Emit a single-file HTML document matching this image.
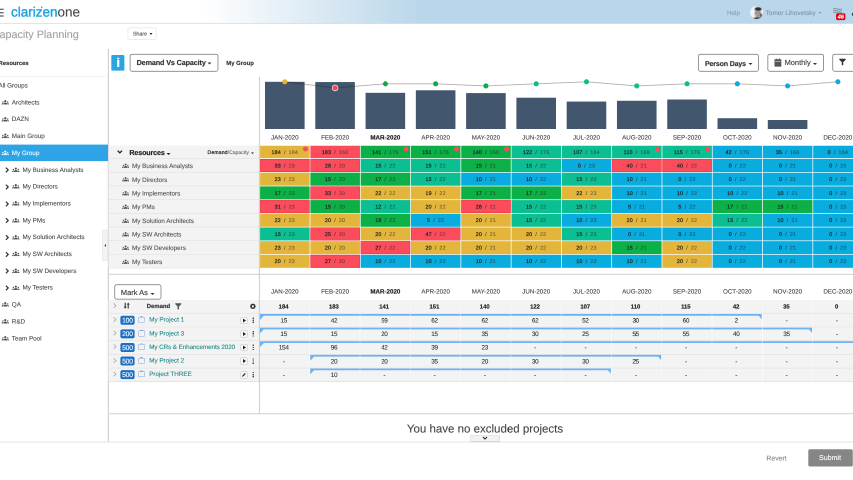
<!DOCTYPE html>
<html><head><meta charset="utf-8"><title>Capacity Planning</title>
<style>
html,body{margin:0;padding:0;background:#fff;overflow:hidden;}
body{width:853px;height:480px;position:relative;font-family:"Liberation Sans",sans-serif;}
#w{position:absolute;left:0;top:0;width:1706px;height:960px;transform:scale(0.5);transform-origin:0 0;overflow:hidden;will-change:transform;font-family:"Liberation Sans",sans-serif;color:#333;text-rendering:geometricPrecision;-webkit-text-stroke:0.18px;}
#w b{font-weight:normal;}
#w [style*="font-weight:bold"]{-webkit-text-stroke:0.3px currentColor;}
#w b{-webkit-text-stroke:0.4px currentColor;letter-spacing:0.03em;}
</style></head><body><div id="w">
<div class="" style="position:absolute;left:0.00px;top:0.00px;width:1706.00px;height:47.00px;background:linear-gradient(90deg,#fff 0,#fff 410.00px,#b9d6ea 850.00px,#b9d6ea 100%);"></div>
<svg style="position:absolute;left:-1px;top:45px;width:1708px;height:4px;overflow:visible"><rect x="1.00" y="1.40" width="1706.00" height="1.40" fill="#d6dade"/></svg>
<svg style="position:absolute;left:-3px;top:16px;width:12px;height:5px;overflow:visible"><rect x="1.00" y="1.30" width="9.40" height="2.60" fill="#666"/></svg>
<svg style="position:absolute;left:-3px;top:23px;width:12px;height:5px;overflow:visible"><rect x="1.00" y="1.10" width="9.40" height="2.60" fill="#666"/></svg>
<svg style="position:absolute;left:-3px;top:29px;width:12px;height:6px;overflow:visible"><rect x="1.00" y="1.70" width="9.40" height="2.60" fill="#666"/></svg>
<div class="" style="position:absolute;top:8.20px;line-height:32.40px;font-size:27.00px;white-space:nowrap;left:22.00px;"><span style="color:#1fa5e2;-webkit-text-stroke:0.84px #1fa5e2;">clarizen</span><span style="color:#4a4a4a;-webkit-text-stroke:0.20px #4a4a4a;">one</span></div>
<svg style="position:absolute;left:81px;top:12px;width:5px;height:6px;overflow:visible"><rect x="1.00" y="1.20" width="2.80" height="3.00" fill="#1fa5e2"/></svg>
<div class="" style="position:absolute;top:18.64px;line-height:15.12px;font-size:12.60px;white-space:nowrap;left:1454.00px;color:#88a0b4;">Help</div>
<svg viewBox="0 0 130 130" style="position:absolute;left:1499.80px;top:11.60px;width:26.00px;height:26.20px"><defs><clipPath id="av"><circle cx="65" cy="65" r="64"/></clipPath><filter id="bl"><feGaussianBlur stdDeviation="4"/></filter></defs><g clip-path="url(#av)"><rect width="130" height="130" fill="#f3f3f3"/><g filter="url(#bl)"><ellipse cx="78" cy="72" rx="33" ry="42" fill="#a8a8a8"/><ellipse cx="82" cy="30" rx="36" ry="19" fill="#2b2b2b"/><ellipse cx="64" cy="70" rx="9" ry="6" fill="#4a4a4a"/><ellipse cx="92" cy="70" rx="8" ry="6" fill="#4a4a4a"/><ellipse cx="80" cy="98" rx="12" ry="5" fill="#666"/><ellipse cx="75" cy="126" rx="45" ry="14" fill="#333"/><ellipse cx="110" cy="95" rx="10" ry="22" fill="#444"/></g></g></svg>
<div class="" style="position:absolute;top:17.50px;line-height:15.41px;font-size:12.84px;white-space:nowrap;left:1531.40px;color:#8092a2;">Tomer Lihovetsky</div>
<div style="position:absolute;left:1637.40px;top:23.60px;width:0;height:0;border-left:3.60px solid transparent;border-right:3.60px solid transparent;border-top:3.80px solid #7d8c99;"></div>
<svg viewBox="0 0 90 60" style="position:absolute;left:1666.00px;top:16.40px;width:18.00px;height:12.00px"><g fill="none" stroke="#74858f" stroke-width="8" stroke-linecap="round"><path d="M4 8C30 -2 50 22 86 10"/><path d="M4 26C30 16 50 40 86 28"/><path d="M4 44C30 34 50 58 86 46"/></g></svg>
<svg style="position:absolute;left:1671px;top:25px;width:21px;height:17px;overflow:visible"><rect x="1.20" y="1.60" width="18.60" height="13.60" rx="3.20" fill="#e60012"/></svg>
<div class="" style="position:absolute;top:27.98px;line-height:13.44px;font-size:11.20px;white-space:nowrap;left:1381.40px;width:600.00px;text-align:center;color:#fff;font-weight:bold;font-style:italic;letter-spacing:-0.03em;">46</div>
<svg style="position:absolute;left:1702px;top:24px;width:11px;height:9px;overflow:visible"><rect x="1.80" y="1.20" width="8.20" height="6.60" rx="2.40" fill="#3c3c3c"/></svg>
<div class="" style="position:absolute;top:55.94px;line-height:25.92px;font-size:21.60px;white-space:nowrap;left:-16.60px;color:#a0a0a0;">Capacity Planning</div>
<svg style="position:absolute;left:252px;top:52px;width:64px;height:30px;overflow:visible"><rect x="3.70" y="3.70" width="57.00" height="23.20" rx="3.60" fill="#fff" stroke="#e9e9e9" stroke-width="1.80"/></svg>
<div class="" style="position:absolute;top:61.72px;line-height:12.96px;font-size:10.80px;white-space:nowrap;left:265.80px;color:#4a4a4a;letter-spacing:-0.015em;">Share</div>
<div style="position:absolute;left:299.00px;top:66.00px;width:0;height:0;border-left:3.70px solid transparent;border-right:3.70px solid transparent;border-top:4.00px solid #2a2a2a;"></div>
<svg style="position:absolute;left:214px;top:97px;width:5px;height:788px;overflow:visible"><rect x="1.60" y="1.00" width="2.20" height="786.00" fill="#cfcfcf"/></svg>
<div class="" style="position:absolute;top:118.92px;line-height:14.16px;font-size:11.80px;white-space:nowrap;left:-3.00px;font-weight:bold;color:#333;">Resources</div>
<svg style="position:absolute;left:-1px;top:151px;width:218px;height:4px;overflow:visible"><rect x="1.00" y="1.40" width="216.00" height="1.00" fill="#e8e8e8"/></svg>
<div class="" style="position:absolute;top:164.04px;line-height:15.12px;font-size:12.60px;white-space:nowrap;left:-3.20px;color:#484848;">All Groups</div>
<svg viewBox="0 0 24 15" style="position:absolute;left:3.20px;top:199.85px;width:15.20px;height:9.50px"><g fill="#484848" stroke="#484848" stroke-width="0.5"><circle cx="12" cy="3.4" r="3.0"/><circle cx="4.4" cy="6.4" r="1.9"/><circle cx="19.6" cy="6.4" r="1.9"/><path d="M6.3 14c0-3.4 2.3-5.6 5.7-5.6s5.700 2.200 5.700 5.600z"/><path d="M0.300 14c0-2.300 1.500-3.700 4.100-3.700.500 0 1 .100 1.500.200-.900 1-1.300 2.100-1.300 3.500z"/><path d="M23.700 14c0-2.300-1.500-3.700-4.100-3.700-.500 0-1 .100-1.500.200.900 1 1.300 2.100 1.300 3.500z"/></g></svg>
<div class="" style="position:absolute;top:197.64px;line-height:15.12px;font-size:12.60px;white-space:nowrap;left:23.60px;color:#484848;">Architects</div>
<svg viewBox="0 0 24 15" style="position:absolute;left:3.20px;top:233.65px;width:15.20px;height:9.50px"><g fill="#484848" stroke="#484848" stroke-width="0.5"><circle cx="12" cy="3.4" r="3.0"/><circle cx="4.4" cy="6.4" r="1.9"/><circle cx="19.6" cy="6.4" r="1.9"/><path d="M6.3 14c0-3.4 2.3-5.6 5.7-5.6s5.700 2.200 5.700 5.600z"/><path d="M0.300 14c0-2.300 1.500-3.700 4.100-3.700.500 0 1 .100 1.500.200-.900 1-1.300 2.100-1.300 3.500z"/><path d="M23.700 14c0-2.300-1.500-3.700-4.100-3.700-.500 0-1 .100-1.500.200.900 1 1.300 2.100 1.300 3.500z"/></g></svg>
<div class="" style="position:absolute;top:231.44px;line-height:15.12px;font-size:12.60px;white-space:nowrap;left:23.60px;color:#484848;">DAZN</div>
<svg viewBox="0 0 24 15" style="position:absolute;left:3.20px;top:267.25px;width:15.20px;height:9.50px"><g fill="#484848" stroke="#484848" stroke-width="0.5"><circle cx="12" cy="3.4" r="3.0"/><circle cx="4.4" cy="6.4" r="1.9"/><circle cx="19.6" cy="6.4" r="1.9"/><path d="M6.3 14c0-3.4 2.3-5.6 5.7-5.6s5.700 2.200 5.700 5.600z"/><path d="M0.300 14c0-2.300 1.500-3.700 4.100-3.700.500 0 1 .100 1.500.200-.900 1-1.300 2.100-1.300 3.500z"/><path d="M23.700 14c0-2.300-1.500-3.700-4.100-3.700-.500 0-1 .100-1.500.200.900 1 1.300 2.100 1.300 3.500z"/></g></svg>
<div class="" style="position:absolute;top:265.04px;line-height:15.12px;font-size:12.60px;white-space:nowrap;left:23.60px;color:#484848;">Main Group</div>
<svg style="position:absolute;left:-1px;top:288px;width:218px;height:36px;overflow:visible"><rect x="1.00" y="1.20" width="216.00" height="33.00" fill="#2ea3e6"/></svg>
<svg viewBox="0 0 24 15" style="position:absolute;left:3.20px;top:301.25px;width:15.20px;height:9.50px"><g fill="#fff" stroke="#fff" stroke-width="0.5"><circle cx="12" cy="3.4" r="3.0"/><circle cx="4.4" cy="6.4" r="1.9"/><circle cx="19.6" cy="6.4" r="1.9"/><path d="M6.3 14c0-3.4 2.3-5.6 5.7-5.6s5.700 2.200 5.700 5.600z"/><path d="M0.300 14c0-2.300 1.500-3.700 4.100-3.700.500 0 1 .100 1.500.200-.900 1-1.300 2.100-1.300 3.500z"/><path d="M23.700 14c0-2.300-1.500-3.700-4.100-3.700-.500 0-1 .100-1.500.200.900 1 1.300 2.100 1.300 3.500z"/></g></svg>
<div class="" style="position:absolute;top:299.04px;line-height:15.12px;font-size:12.60px;white-space:nowrap;left:23.60px;color:#fff;">My Group</div>
<svg viewBox="0 0 10 14" style="position:absolute;left:9.60px;top:334.40px;width:8.60px;height:11.80px"><path d="M2 1.5L7.5 7L2 12.5" fill="none" stroke="#333" stroke-width="2.9"/></svg>
<svg viewBox="0 0 24 15" style="position:absolute;left:24.40px;top:334.85px;width:15.20px;height:9.50px"><g fill="#484848" stroke="#484848" stroke-width="0.5"><circle cx="12" cy="3.4" r="3.0"/><circle cx="4.4" cy="6.4" r="1.9"/><circle cx="19.6" cy="6.4" r="1.9"/><path d="M6.3 14c0-3.4 2.3-5.6 5.7-5.6s5.700 2.200 5.700 5.600z"/><path d="M0.300 14c0-2.300 1.500-3.700 4.100-3.700.500 0 1 .100 1.500.200-.900 1-1.300 2.100-1.300 3.500z"/><path d="M23.700 14c0-2.300-1.500-3.700-4.100-3.700-.500 0-1 .100-1.500.200.900 1 1.300 2.100 1.300 3.500z"/></g></svg>
<div class="" style="position:absolute;top:332.64px;line-height:15.12px;font-size:12.60px;white-space:nowrap;left:45.00px;color:#484848;">My Business Analysts</div>
<svg viewBox="0 0 10 14" style="position:absolute;left:9.60px;top:368.00px;width:8.60px;height:11.80px"><path d="M2 1.5L7.5 7L2 12.5" fill="none" stroke="#333" stroke-width="2.9"/></svg>
<svg viewBox="0 0 24 15" style="position:absolute;left:24.40px;top:368.45px;width:15.20px;height:9.50px"><g fill="#484848" stroke="#484848" stroke-width="0.5"><circle cx="12" cy="3.4" r="3.0"/><circle cx="4.4" cy="6.4" r="1.9"/><circle cx="19.6" cy="6.4" r="1.9"/><path d="M6.3 14c0-3.4 2.3-5.6 5.7-5.6s5.700 2.200 5.700 5.600z"/><path d="M0.300 14c0-2.300 1.500-3.700 4.100-3.700.500 0 1 .100 1.500.200-.900 1-1.300 2.100-1.300 3.500z"/><path d="M23.700 14c0-2.300-1.500-3.700-4.100-3.700-.500 0-1 .100-1.500.200.900 1 1.300 2.100 1.300 3.500z"/></g></svg>
<div class="" style="position:absolute;top:366.24px;line-height:15.12px;font-size:12.60px;white-space:nowrap;left:45.00px;color:#484848;">My Directors</div>
<svg viewBox="0 0 10 14" style="position:absolute;left:9.60px;top:401.80px;width:8.60px;height:11.80px"><path d="M2 1.5L7.5 7L2 12.5" fill="none" stroke="#333" stroke-width="2.9"/></svg>
<svg viewBox="0 0 24 15" style="position:absolute;left:24.40px;top:402.25px;width:15.20px;height:9.50px"><g fill="#484848" stroke="#484848" stroke-width="0.5"><circle cx="12" cy="3.4" r="3.0"/><circle cx="4.4" cy="6.4" r="1.9"/><circle cx="19.6" cy="6.4" r="1.9"/><path d="M6.3 14c0-3.4 2.3-5.6 5.7-5.6s5.700 2.200 5.700 5.600z"/><path d="M0.300 14c0-2.300 1.500-3.700 4.100-3.700.500 0 1 .100 1.500.200-.900 1-1.300 2.100-1.300 3.500z"/><path d="M23.700 14c0-2.300-1.500-3.700-4.100-3.700-.500 0-1 .100-1.500.200.900 1 1.300 2.100 1.300 3.500z"/></g></svg>
<div class="" style="position:absolute;top:400.04px;line-height:15.12px;font-size:12.60px;white-space:nowrap;left:45.00px;color:#484848;">My Implementors</div>
<svg viewBox="0 0 10 14" style="position:absolute;left:9.60px;top:435.40px;width:8.60px;height:11.80px"><path d="M2 1.5L7.5 7L2 12.5" fill="none" stroke="#333" stroke-width="2.9"/></svg>
<svg viewBox="0 0 24 15" style="position:absolute;left:24.40px;top:435.85px;width:15.20px;height:9.50px"><g fill="#484848" stroke="#484848" stroke-width="0.5"><circle cx="12" cy="3.4" r="3.0"/><circle cx="4.4" cy="6.4" r="1.9"/><circle cx="19.6" cy="6.4" r="1.9"/><path d="M6.3 14c0-3.4 2.3-5.6 5.7-5.6s5.700 2.200 5.700 5.600z"/><path d="M0.300 14c0-2.300 1.500-3.700 4.100-3.700.500 0 1 .100 1.500.200-.900 1-1.300 2.100-1.300 3.500z"/><path d="M23.700 14c0-2.300-1.500-3.700-4.100-3.700-.500 0-1 .100-1.500.200.900 1 1.300 2.100 1.300 3.500z"/></g></svg>
<div class="" style="position:absolute;top:433.64px;line-height:15.12px;font-size:12.60px;white-space:nowrap;left:45.00px;color:#484848;">My PMs</div>
<svg viewBox="0 0 10 14" style="position:absolute;left:9.60px;top:469.20px;width:8.60px;height:11.80px"><path d="M2 1.5L7.5 7L2 12.5" fill="none" stroke="#333" stroke-width="2.9"/></svg>
<svg viewBox="0 0 24 15" style="position:absolute;left:24.40px;top:469.65px;width:15.20px;height:9.50px"><g fill="#484848" stroke="#484848" stroke-width="0.5"><circle cx="12" cy="3.4" r="3.0"/><circle cx="4.4" cy="6.4" r="1.9"/><circle cx="19.6" cy="6.4" r="1.9"/><path d="M6.3 14c0-3.4 2.3-5.6 5.7-5.6s5.700 2.200 5.700 5.600z"/><path d="M0.300 14c0-2.300 1.500-3.700 4.100-3.700.500 0 1 .100 1.500.200-.900 1-1.300 2.100-1.300 3.500z"/><path d="M23.700 14c0-2.300-1.500-3.700-4.100-3.700-.500 0-1 .100-1.500.200.900 1 1.300 2.100 1.300 3.500z"/></g></svg>
<div class="" style="position:absolute;top:467.44px;line-height:15.12px;font-size:12.60px;white-space:nowrap;left:45.00px;color:#484848;">My Solution Architects</div>
<svg viewBox="0 0 10 14" style="position:absolute;left:9.60px;top:502.80px;width:8.60px;height:11.80px"><path d="M2 1.5L7.5 7L2 12.5" fill="none" stroke="#333" stroke-width="2.9"/></svg>
<svg viewBox="0 0 24 15" style="position:absolute;left:24.40px;top:503.25px;width:15.20px;height:9.50px"><g fill="#484848" stroke="#484848" stroke-width="0.5"><circle cx="12" cy="3.4" r="3.0"/><circle cx="4.4" cy="6.4" r="1.9"/><circle cx="19.6" cy="6.4" r="1.9"/><path d="M6.3 14c0-3.4 2.3-5.6 5.7-5.6s5.700 2.200 5.700 5.600z"/><path d="M0.300 14c0-2.300 1.500-3.700 4.100-3.700.500 0 1 .100 1.500.200-.900 1-1.300 2.100-1.300 3.500z"/><path d="M23.700 14c0-2.300-1.500-3.700-4.100-3.700-.500 0-1 .100-1.500.200.900 1 1.300 2.100 1.300 3.500z"/></g></svg>
<div class="" style="position:absolute;top:501.04px;line-height:15.12px;font-size:12.60px;white-space:nowrap;left:45.00px;color:#484848;">My SW Architects</div>
<svg viewBox="0 0 10 14" style="position:absolute;left:9.60px;top:536.40px;width:8.60px;height:11.80px"><path d="M2 1.5L7.5 7L2 12.5" fill="none" stroke="#333" stroke-width="2.9"/></svg>
<svg viewBox="0 0 24 15" style="position:absolute;left:24.40px;top:536.85px;width:15.20px;height:9.50px"><g fill="#484848" stroke="#484848" stroke-width="0.5"><circle cx="12" cy="3.4" r="3.0"/><circle cx="4.4" cy="6.4" r="1.9"/><circle cx="19.6" cy="6.4" r="1.9"/><path d="M6.3 14c0-3.4 2.3-5.6 5.7-5.6s5.700 2.200 5.700 5.600z"/><path d="M0.300 14c0-2.300 1.500-3.700 4.100-3.700.500 0 1 .100 1.500.200-.900 1-1.300 2.100-1.300 3.500z"/><path d="M23.700 14c0-2.300-1.500-3.700-4.100-3.700-.500 0-1 .100-1.500.200.900 1 1.300 2.100 1.300 3.500z"/></g></svg>
<div class="" style="position:absolute;top:534.64px;line-height:15.12px;font-size:12.60px;white-space:nowrap;left:45.00px;color:#484848;">My SW Developers</div>
<svg viewBox="0 0 10 14" style="position:absolute;left:9.60px;top:570.20px;width:8.60px;height:11.80px"><path d="M2 1.5L7.5 7L2 12.5" fill="none" stroke="#333" stroke-width="2.9"/></svg>
<svg viewBox="0 0 24 15" style="position:absolute;left:24.40px;top:570.65px;width:15.20px;height:9.50px"><g fill="#484848" stroke="#484848" stroke-width="0.5"><circle cx="12" cy="3.4" r="3.0"/><circle cx="4.4" cy="6.4" r="1.9"/><circle cx="19.6" cy="6.4" r="1.9"/><path d="M6.3 14c0-3.4 2.3-5.6 5.7-5.6s5.700 2.200 5.700 5.600z"/><path d="M0.300 14c0-2.300 1.500-3.700 4.100-3.700.500 0 1 .100 1.500.200-.900 1-1.300 2.100-1.300 3.500z"/><path d="M23.700 14c0-2.300-1.500-3.700-4.100-3.700-.500 0-1 .100-1.500.200.900 1 1.300 2.100 1.300 3.500z"/></g></svg>
<div class="" style="position:absolute;top:568.44px;line-height:15.12px;font-size:12.60px;white-space:nowrap;left:45.00px;color:#484848;">My Testers</div>
<svg viewBox="0 0 24 15" style="position:absolute;left:3.20px;top:604.45px;width:15.20px;height:9.50px"><g fill="#484848" stroke="#484848" stroke-width="0.5"><circle cx="12" cy="3.4" r="3.0"/><circle cx="4.4" cy="6.4" r="1.9"/><circle cx="19.6" cy="6.4" r="1.9"/><path d="M6.3 14c0-3.4 2.3-5.6 5.7-5.6s5.700 2.200 5.700 5.600z"/><path d="M0.300 14c0-2.300 1.500-3.700 4.100-3.700.500 0 1 .100 1.500.200-.900 1-1.300 2.100-1.300 3.500z"/><path d="M23.700 14c0-2.300-1.500-3.700-4.100-3.700-.500 0-1 .100-1.500.200.900 1 1.300 2.100 1.300 3.500z"/></g></svg>
<div class="" style="position:absolute;top:602.24px;line-height:15.12px;font-size:12.60px;white-space:nowrap;left:23.60px;color:#484848;">QA</div>
<svg viewBox="0 0 24 15" style="position:absolute;left:3.20px;top:638.05px;width:15.20px;height:9.50px"><g fill="#484848" stroke="#484848" stroke-width="0.5"><circle cx="12" cy="3.4" r="3.0"/><circle cx="4.4" cy="6.4" r="1.9"/><circle cx="19.6" cy="6.4" r="1.9"/><path d="M6.3 14c0-3.4 2.3-5.6 5.7-5.6s5.700 2.200 5.700 5.600z"/><path d="M0.300 14c0-2.300 1.500-3.700 4.100-3.700.500 0 1 .100 1.500.200-.900 1-1.300 2.100-1.300 3.500z"/><path d="M23.700 14c0-2.300-1.500-3.700-4.100-3.700-.500 0-1 .100-1.500.200.900 1 1.300 2.100 1.300 3.500z"/></g></svg>
<div class="" style="position:absolute;top:635.84px;line-height:15.12px;font-size:12.60px;white-space:nowrap;left:23.60px;color:#484848;">R&amp;D</div>
<svg viewBox="0 0 24 15" style="position:absolute;left:3.20px;top:671.85px;width:15.20px;height:9.50px"><g fill="#484848" stroke="#484848" stroke-width="0.5"><circle cx="12" cy="3.4" r="3.0"/><circle cx="4.4" cy="6.4" r="1.9"/><circle cx="19.6" cy="6.4" r="1.9"/><path d="M6.3 14c0-3.4 2.3-5.6 5.7-5.6s5.700 2.200 5.700 5.600z"/><path d="M0.300 14c0-2.300 1.500-3.700 4.100-3.700.500 0 1 .100 1.500.200-.900 1-1.300 2.100-1.300 3.500z"/><path d="M23.700 14c0-2.300-1.500-3.700-4.100-3.700-.500 0-1 .100-1.500.200.900 1 1.300 2.100 1.300 3.500z"/></g></svg>
<div class="" style="position:absolute;top:669.64px;line-height:15.12px;font-size:12.60px;white-space:nowrap;left:23.60px;color:#484848;">Team Pool</div>
<svg style="position:absolute;left:202px;top:457px;width:16px;height:67px;overflow:visible"><rect x="3.10" y="2.90" width="9.80" height="61.20" rx="1.00" fill="#f3f3f3" stroke="#dedede" stroke-width="1.00"/></svg>
<div style="position:absolute;left:208.60px;top:487.80px;width:0;height:0;border-top:3.00px solid transparent;border-bottom:3.00px solid transparent;border-right:3.80px solid #333;"></div>
<svg style="position:absolute;left:221px;top:109px;width:29px;height:34px;overflow:visible"><rect x="1.60" y="1.00" width="26.20" height="31.20" rx="2.00" fill="#29a5e3"/></svg>
<svg style="position:absolute;left:233px;top:114px;width:7px;height:6px;overflow:visible"><rect x="1.30" y="1.40" width="4.30" height="3.20" rx="1.00" fill="#fff"/></svg>
<svg style="position:absolute;left:233px;top:118px;width:7px;height:17px;overflow:visible"><rect x="1.30" y="1.80" width="4.30" height="14.20" fill="#fff"/></svg>
<svg style="position:absolute;left:257px;top:105px;width:182px;height:41px;overflow:visible"><rect x="3.25" y="3.55" width="175.70" height="34.10" rx="4.00" fill="#fff" stroke="#858585" stroke-width="1.70"/></svg>
<div class="" style="position:absolute;top:118.30px;line-height:17.40px;font-size:14.50px;white-space:nowrap;left:273.20px;font-weight:bold;color:#333;letter-spacing:-0.02em;">Demand Vs Capacity</div>
<div style="position:absolute;left:414.60px;top:124.80px;width:0;height:0;border-left:4.00px solid transparent;border-right:4.00px solid transparent;border-top:4.00px solid #333;"></div>
<div class="" style="position:absolute;top:118.52px;line-height:14.16px;font-size:11.80px;white-space:nowrap;left:452.60px;font-weight:bold;color:#333;">My Group</div>
<svg style="position:absolute;left:1394px;top:105px;width:126px;height:41px;overflow:visible"><rect x="2.85" y="3.55" width="120.10" height="34.10" rx="4.00" fill="#fff" stroke="#858585" stroke-width="1.70"/></svg>
<div class="" style="position:absolute;top:118.60px;line-height:16.80px;font-size:14.00px;white-space:nowrap;left:1410.00px;font-weight:bold;color:#333;letter-spacing:-0.02em;">Person Days</div>
<div style="position:absolute;left:1496.80px;top:125.80px;width:0;height:0;border-left:4.00px solid transparent;border-right:4.00px solid transparent;border-top:4.00px solid #333;"></div>
<svg style="position:absolute;left:1532px;top:105px;width:118px;height:41px;overflow:visible"><rect x="3.65" y="3.55" width="111.50" height="34.10" rx="4.00" fill="#fff" stroke="#858585" stroke-width="1.70"/></svg>
<svg style="position:absolute;left:1548px;top:117px;width:16px;height:18px;overflow:visible"><rect x="1.00" y="1.60" width="13.60" height="14.60" rx="1.00" fill="#555"/></svg>
<svg style="position:absolute;left:1549px;top:121px;width:14px;height:4px;overflow:visible"><rect x="1.40" y="1.40" width="10.80" height="1.20" fill="#ddd"/></svg>
<svg style="position:absolute;left:1550px;top:115px;width:5px;height:6px;overflow:visible"><rect x="1.60" y="1.80" width="1.60" height="3.20" fill="#555"/></svg>
<svg style="position:absolute;left:1557px;top:115px;width:4px;height:6px;overflow:visible"><rect x="1.40" y="1.80" width="1.60" height="3.20" fill="#555"/></svg>
<div class="" style="position:absolute;top:118.26px;line-height:17.88px;font-size:14.90px;white-space:nowrap;left:1569.20px;color:#333;-webkit-text-stroke:0.16px #333;">Monthly</div>
<div style="position:absolute;left:1626.40px;top:125.80px;width:0;height:0;border-left:4.00px solid transparent;border-right:4.00px solid transparent;border-top:4.00px solid #333;"></div>
<svg style="position:absolute;left:1662px;top:105px;width:60px;height:41px;overflow:visible"><rect x="3.45" y="3.55" width="53.70" height="34.10" rx="4.00" fill="#fff" stroke="#858585" stroke-width="1.70"/></svg>
<svg viewBox="0 0 12 12" style="position:absolute;left:1677.80px;top:117.40px;width:14.00px;height:14.00px"><path d="M0.5 0.5h11v1.6L7.3 6.3V11.5H4.7V6.3L0.5 2.1z" fill="#333"/></svg>
<svg style="position:absolute;left:529px;top:162px;width:82px;height:97px;overflow:visible"><rect x="1.00" y="1.61" width="79.20" height="94.39" fill="#42566e"/></svg>
<svg style="position:absolute;left:629px;top:163px;width:82px;height:96px;overflow:visible"><rect x="1.56" y="1.12" width="79.20" height="93.88" fill="#42566e"/></svg>
<svg style="position:absolute;left:730px;top:184px;width:82px;height:75px;overflow:visible"><rect x="1.12" y="1.67" width="79.20" height="72.33" fill="#42566e"/></svg>
<svg style="position:absolute;left:830px;top:179px;width:82px;height:80px;overflow:visible"><rect x="1.68" y="1.54" width="79.20" height="77.46" fill="#42566e"/></svg>
<svg style="position:absolute;left:931px;top:185px;width:82px;height:74px;overflow:visible"><rect x="1.24" y="1.18" width="79.20" height="71.82" fill="#42566e"/></svg>
<svg style="position:absolute;left:1031px;top:194px;width:82px;height:65px;overflow:visible"><rect x="1.80" y="1.41" width="79.20" height="62.59" fill="#42566e"/></svg>
<svg style="position:absolute;left:1132px;top:202px;width:82px;height:57px;overflow:visible"><rect x="1.36" y="1.11" width="79.20" height="54.89" fill="#42566e"/></svg>
<svg style="position:absolute;left:1232px;top:200px;width:83px;height:59px;overflow:visible"><rect x="1.92" y="1.57" width="79.20" height="56.43" fill="#42566e"/></svg>
<svg style="position:absolute;left:1333px;top:198px;width:82px;height:61px;overflow:visible"><rect x="1.48" y="1.00" width="79.20" height="59.00" fill="#42566e"/></svg>
<svg style="position:absolute;left:1434px;top:235px;width:82px;height:24px;overflow:visible"><rect x="1.04" y="1.45" width="79.20" height="21.55" fill="#42566e"/></svg>
<svg style="position:absolute;left:1534px;top:239px;width:82px;height:20px;overflow:visible"><rect x="1.60" y="1.04" width="79.20" height="17.96" fill="#42566e"/></svg>
<svg style="position:absolute;left:0;top:0;width:1800.00px;height:280.00px;overflow:visible" viewBox="0 0 1800 280"><polyline points="569.60,163.61 670.16,175.92 770.72,167.71 871.28,167.71 971.84,171.82 1072.40,167.71 1172.96,163.61 1273.52,171.82 1374.08,167.71 1474.64,167.71 1575.20,171.82 1675.76,163.61" fill="none" stroke="rgba(30,30,30,0.36)" stroke-width="1.7"/>
<circle cx="569.60" cy="163.61" r="5.1" fill="#e2b436"/>
<circle cx="670.16" cy="175.92" r="6.6" fill="#fff" fill-opacity="0.85"/>
<circle cx="670.16" cy="175.92" r="5.1" fill="#fb4556"/>
<circle cx="770.72" cy="167.71" r="5.1" fill="#0fab46"/>
<circle cx="871.28" cy="167.71" r="5.1" fill="#0fab46"/>
<circle cx="971.84" cy="171.82" r="5.1" fill="#0fab46"/>
<circle cx="1072.40" cy="167.71" r="5.1" fill="#0fbd8c"/>
<circle cx="1172.96" cy="163.61" r="5.1" fill="#0fbd8c"/>
<circle cx="1273.52" cy="171.82" r="5.1" fill="#0fbd8c"/>
<circle cx="1374.08" cy="167.71" r="5.1" fill="#0fbd8c"/>
<circle cx="1474.64" cy="167.71" r="5.1" fill="#10a9dd"/>
<circle cx="1575.20" cy="171.82" r="5.1" fill="#10a9dd"/>
<circle cx="1675.76" cy="163.61" r="5.1" fill="#10a9dd"/>
</svg>
<div class="" style="position:absolute;top:268.26px;line-height:14.88px;font-size:12.40px;white-space:nowrap;left:269.60px;width:600.00px;text-align:center;color:#3c3c3c;">JAN-2020</div>
<div class="" style="position:absolute;top:268.26px;line-height:14.88px;font-size:12.40px;white-space:nowrap;left:370.16px;width:600.00px;text-align:center;color:#3c3c3c;">FEB-2020</div>
<div class="" style="position:absolute;top:268.26px;line-height:14.88px;font-size:12.40px;white-space:nowrap;left:470.72px;width:600.00px;text-align:center;color:#222;font-weight:bold;">MAR-2020</div>
<div class="" style="position:absolute;top:268.26px;line-height:14.88px;font-size:12.40px;white-space:nowrap;left:571.28px;width:600.00px;text-align:center;color:#3c3c3c;">APR-2020</div>
<div class="" style="position:absolute;top:268.26px;line-height:14.88px;font-size:12.40px;white-space:nowrap;left:671.84px;width:600.00px;text-align:center;color:#3c3c3c;">MAY-2020</div>
<div class="" style="position:absolute;top:268.26px;line-height:14.88px;font-size:12.40px;white-space:nowrap;left:772.40px;width:600.00px;text-align:center;color:#3c3c3c;">JUN-2020</div>
<div class="" style="position:absolute;top:268.26px;line-height:14.88px;font-size:12.40px;white-space:nowrap;left:872.96px;width:600.00px;text-align:center;color:#3c3c3c;">JUL-2020</div>
<div class="" style="position:absolute;top:268.26px;line-height:14.88px;font-size:12.40px;white-space:nowrap;left:973.52px;width:600.00px;text-align:center;color:#3c3c3c;">AUG-2020</div>
<div class="" style="position:absolute;top:268.26px;line-height:14.88px;font-size:12.40px;white-space:nowrap;left:1074.08px;width:600.00px;text-align:center;color:#3c3c3c;">SEP-2020</div>
<div class="" style="position:absolute;top:268.26px;line-height:14.88px;font-size:12.40px;white-space:nowrap;left:1174.64px;width:600.00px;text-align:center;color:#3c3c3c;">OCT-2020</div>
<div class="" style="position:absolute;top:268.26px;line-height:14.88px;font-size:12.40px;white-space:nowrap;left:1275.20px;width:600.00px;text-align:center;color:#3c3c3c;">NOV-2020</div>
<div class="" style="position:absolute;top:268.26px;line-height:14.88px;font-size:12.40px;white-space:nowrap;left:1375.76px;width:600.00px;text-align:center;color:#3c3c3c;">DEC-2020</div>
<svg style="position:absolute;left:216px;top:290px;width:303px;height:248px;overflow:visible"><rect x="1.20" y="1.00" width="300.80" height="245.68" fill="#f3f3f3"/></svg>
<svg style="position:absolute;left:216px;top:315px;width:303px;height:4px;overflow:visible"><rect x="1.20" y="1.40" width="300.80" height="1.20" fill="#e2e2e2"/></svg>
<svg style="position:absolute;left:216px;top:342px;width:303px;height:4px;overflow:visible"><rect x="1.20" y="1.78" width="300.80" height="1.20" fill="#e2e2e2"/></svg>
<svg style="position:absolute;left:216px;top:370px;width:303px;height:4px;overflow:visible"><rect x="1.20" y="1.16" width="300.80" height="1.20" fill="#e2e2e2"/></svg>
<svg style="position:absolute;left:216px;top:397px;width:303px;height:4px;overflow:visible"><rect x="1.20" y="1.54" width="300.80" height="1.20" fill="#e2e2e2"/></svg>
<svg style="position:absolute;left:216px;top:424px;width:303px;height:5px;overflow:visible"><rect x="1.20" y="1.92" width="300.80" height="1.20" fill="#e2e2e2"/></svg>
<svg style="position:absolute;left:216px;top:452px;width:303px;height:4px;overflow:visible"><rect x="1.20" y="1.30" width="300.80" height="1.20" fill="#e2e2e2"/></svg>
<svg style="position:absolute;left:216px;top:479px;width:303px;height:4px;overflow:visible"><rect x="1.20" y="1.68" width="300.80" height="1.20" fill="#e2e2e2"/></svg>
<svg style="position:absolute;left:216px;top:507px;width:303px;height:4px;overflow:visible"><rect x="1.20" y="1.06" width="300.80" height="1.20" fill="#e2e2e2"/></svg>
<svg style="position:absolute;left:216px;top:534px;width:303px;height:4px;overflow:visible"><rect x="1.20" y="1.44" width="300.80" height="1.20" fill="#e2e2e2"/></svg>
<svg viewBox="0 0 12 8" style="position:absolute;left:233.60px;top:300.00px;width:11.40px;height:7.60px"><path d="M1.4 1.4L6 6L10.6 1.4" fill="none" stroke="#222" stroke-width="2.7"/></svg>
<div class="" style="position:absolute;top:297.72px;line-height:17.16px;font-size:14.30px;white-space:nowrap;left:258.80px;font-weight:bold;color:#222;letter-spacing:-0.02em;">Resources</div>
<div style="position:absolute;left:332.60px;top:306.00px;width:0;height:0;border-left:4.20px solid transparent;border-right:4.20px solid transparent;border-top:4.00px solid #222;"></div>
<div class="" style="position:absolute;top:299.68px;line-height:12.24px;font-size:10.20px;white-space:nowrap;left:415.00px;"><b style="color:#222">Demand</b><span style="color:#666">/Capacity</span></div>
<div style="position:absolute;left:502.00px;top:304.60px;width:0;height:0;border-left:3.80px solid transparent;border-right:3.80px solid transparent;border-top:3.80px solid #222;"></div>
<svg style="position:absolute;left:519px;top:290px;width:102px;height:28px;overflow:visible"><rect x="1.20" y="1.50" width="99.12" height="24.90" fill="#e3b63b"/></svg>
<div class="" style="position:absolute;top:298.73px;line-height:12.84px;font-size:10.70px;white-space:nowrap;left:269.60px;width:600.00px;text-align:center;word-spacing:0.08em;"><b style="color:#222">184</b><span style="color:rgba(40,40,40,0.6)"><span style="margin:0 2.40px;color:rgba(40,40,40,0.75)">&nbsp;/&nbsp;</span><span style="letter-spacing:0.04em">184</span></span></div>
<div class="" style="position:absolute;left:606.00px;top:293.30px;width:10.00px;height:10.00px;background:#f94d5c;border-radius:50%;"></div>
<svg style="position:absolute;left:619px;top:290px;width:102px;height:28px;overflow:visible"><rect x="1.76" y="1.50" width="99.12" height="24.90" fill="#fb4c5c"/></svg>
<div class="" style="position:absolute;top:298.73px;line-height:12.84px;font-size:10.70px;white-space:nowrap;left:370.16px;width:600.00px;text-align:center;word-spacing:0.08em;"><b style="color:#222">183</b><span style="color:rgba(40,40,40,0.6)"><span style="margin:0 2.40px;color:rgba(40,40,40,0.75)">&nbsp;/&nbsp;</span><span style="letter-spacing:0.04em">160</span></span></div>
<svg style="position:absolute;left:720px;top:290px;width:102px;height:28px;overflow:visible"><rect x="1.32" y="1.50" width="99.12" height="24.90" fill="#0cb046"/></svg>
<div class="" style="position:absolute;top:298.73px;line-height:12.84px;font-size:10.70px;white-space:nowrap;left:470.72px;width:600.00px;text-align:center;word-spacing:0.08em;"><b style="color:#222">141</b><span style="color:rgba(40,40,40,0.6)"><span style="margin:0 2.40px;color:rgba(40,40,40,0.75)">&nbsp;/&nbsp;</span><span style="letter-spacing:0.04em">176</span></span></div>
<div class="" style="position:absolute;left:807.12px;top:293.30px;width:10.00px;height:10.00px;background:#f94d5c;border-radius:50%;"></div>
<svg style="position:absolute;left:820px;top:290px;width:102px;height:28px;overflow:visible"><rect x="1.88" y="1.50" width="99.12" height="24.90" fill="#0cb046"/></svg>
<div class="" style="position:absolute;top:298.73px;line-height:12.84px;font-size:10.70px;white-space:nowrap;left:571.28px;width:600.00px;text-align:center;word-spacing:0.08em;"><b style="color:#222">151</b><span style="color:rgba(40,40,40,0.6)"><span style="margin:0 2.40px;color:rgba(40,40,40,0.75)">&nbsp;/&nbsp;</span><span style="letter-spacing:0.04em">176</span></span></div>
<div class="" style="position:absolute;left:907.68px;top:293.30px;width:10.00px;height:10.00px;background:#f94d5c;border-radius:50%;"></div>
<svg style="position:absolute;left:921px;top:290px;width:102px;height:28px;overflow:visible"><rect x="1.44" y="1.50" width="99.12" height="24.90" fill="#0cb046"/></svg>
<div class="" style="position:absolute;top:298.73px;line-height:12.84px;font-size:10.70px;white-space:nowrap;left:671.84px;width:600.00px;text-align:center;word-spacing:0.08em;"><b style="color:#222">140</b><span style="color:rgba(40,40,40,0.6)"><span style="margin:0 2.40px;color:rgba(40,40,40,0.75)">&nbsp;/&nbsp;</span><span style="letter-spacing:0.04em">168</span></span></div>
<div class="" style="position:absolute;left:1008.24px;top:293.30px;width:10.00px;height:10.00px;background:#f94d5c;border-radius:50%;"></div>
<svg style="position:absolute;left:1022px;top:290px;width:102px;height:28px;overflow:visible"><rect x="1.00" y="1.50" width="99.12" height="24.90" fill="#0cbf92"/></svg>
<div class="" style="position:absolute;top:298.73px;line-height:12.84px;font-size:10.70px;white-space:nowrap;left:772.40px;width:600.00px;text-align:center;word-spacing:0.08em;"><b style="color:#222">122</b><span style="color:rgba(40,40,40,0.6)"><span style="margin:0 2.40px;color:rgba(40,40,40,0.75)">&nbsp;/&nbsp;</span><span style="letter-spacing:0.04em">176</span></span></div>
<svg style="position:absolute;left:1122px;top:290px;width:102px;height:28px;overflow:visible"><rect x="1.56" y="1.50" width="99.12" height="24.90" fill="#0cbf92"/></svg>
<div class="" style="position:absolute;top:298.73px;line-height:12.84px;font-size:10.70px;white-space:nowrap;left:872.96px;width:600.00px;text-align:center;word-spacing:0.08em;"><b style="color:#222">107</b><span style="color:rgba(40,40,40,0.6)"><span style="margin:0 2.40px;color:rgba(40,40,40,0.75)">&nbsp;/&nbsp;</span><span style="letter-spacing:0.04em">184</span></span></div>
<svg style="position:absolute;left:1223px;top:290px;width:102px;height:28px;overflow:visible"><rect x="1.12" y="1.50" width="99.12" height="24.90" fill="#0cbf92"/></svg>
<div class="" style="position:absolute;top:298.73px;line-height:12.84px;font-size:10.70px;white-space:nowrap;left:973.52px;width:600.00px;text-align:center;word-spacing:0.08em;"><b style="color:#222">110</b><span style="color:rgba(40,40,40,0.6)"><span style="margin:0 2.40px;color:rgba(40,40,40,0.75)">&nbsp;/&nbsp;</span><span style="letter-spacing:0.04em">168</span></span></div>
<div class="" style="position:absolute;left:1309.92px;top:293.30px;width:10.00px;height:10.00px;background:#f94d5c;border-radius:50%;"></div>
<svg style="position:absolute;left:1323px;top:290px;width:102px;height:28px;overflow:visible"><rect x="1.68" y="1.50" width="99.12" height="24.90" fill="#0cbf92"/></svg>
<div class="" style="position:absolute;top:298.73px;line-height:12.84px;font-size:10.70px;white-space:nowrap;left:1074.08px;width:600.00px;text-align:center;word-spacing:0.08em;"><b style="color:#222">115</b><span style="color:rgba(40,40,40,0.6)"><span style="margin:0 2.40px;color:rgba(40,40,40,0.75)">&nbsp;/&nbsp;</span><span style="letter-spacing:0.04em">176</span></span></div>
<div class="" style="position:absolute;left:1410.48px;top:293.30px;width:10.00px;height:10.00px;background:#f94d5c;border-radius:50%;"></div>
<svg style="position:absolute;left:1424px;top:290px;width:102px;height:28px;overflow:visible"><rect x="1.24" y="1.50" width="99.12" height="24.90" fill="#08acde"/></svg>
<div class="" style="position:absolute;top:298.73px;line-height:12.84px;font-size:10.70px;white-space:nowrap;left:1174.64px;width:600.00px;text-align:center;word-spacing:0.08em;"><b style="color:#222">42</b><span style="color:rgba(40,40,40,0.6)"><span style="margin:0 2.40px;color:rgba(40,40,40,0.75)">&nbsp;/&nbsp;</span><span style="letter-spacing:0.04em">176</span></span></div>
<svg style="position:absolute;left:1524px;top:290px;width:102px;height:28px;overflow:visible"><rect x="1.80" y="1.50" width="99.12" height="24.90" fill="#08acde"/></svg>
<div class="" style="position:absolute;top:298.73px;line-height:12.84px;font-size:10.70px;white-space:nowrap;left:1275.20px;width:600.00px;text-align:center;word-spacing:0.08em;"><b style="color:#222">35</b><span style="color:rgba(40,40,40,0.6)"><span style="margin:0 2.40px;color:rgba(40,40,40,0.75)">&nbsp;/&nbsp;</span><span style="letter-spacing:0.04em">168</span></span></div>
<svg style="position:absolute;left:1625px;top:290px;width:102px;height:28px;overflow:visible"><rect x="1.36" y="1.50" width="99.12" height="24.90" fill="#08acde"/></svg>
<div class="" style="position:absolute;top:298.73px;line-height:12.84px;font-size:10.70px;white-space:nowrap;left:1375.76px;width:600.00px;text-align:center;word-spacing:0.08em;"><b style="color:#222">0</b><span style="color:rgba(40,40,40,0.6)"><span style="margin:0 2.40px;color:rgba(40,40,40,0.75)">&nbsp;/&nbsp;</span><span style="letter-spacing:0.04em">184</span></span></div>
<svg viewBox="0 0 24 15" style="position:absolute;left:244.00px;top:327.11px;width:14.40px;height:9.00px"><g fill="#4a4a4a" stroke="#4a4a4a" stroke-width="0.5"><circle cx="12" cy="3.4" r="3.0"/><circle cx="4.4" cy="6.4" r="1.9"/><circle cx="19.6" cy="6.4" r="1.9"/><path d="M6.3 14c0-3.4 2.3-5.6 5.7-5.6s5.700 2.200 5.700 5.600z"/><path d="M0.300 14c0-2.300 1.500-3.700 4.100-3.700.500 0 1 .100 1.500.200-.900 1-1.300 2.100-1.300 3.500z"/><path d="M23.700 14c0-2.300-1.500-3.700-4.100-3.700-.500 0-1 .100-1.500.200.900 1 1.300 2.100 1.300 3.500z"/></g></svg>
<div class="" style="position:absolute;top:325.15px;line-height:15.12px;font-size:12.60px;white-space:nowrap;left:264.00px;color:#505050;">My Business Analysts</div>
<svg style="position:absolute;left:519px;top:317px;width:102px;height:29px;overflow:visible"><rect x="1.20" y="1.00" width="99.12" height="26.02" fill="#fb4c5c"/></svg>
<svg style="position:absolute;left:518px;top:316px;width:104px;height:31px;overflow:visible"><rect x="2.70" y="2.50" width="98.12" height="25.02" rx="0.00" fill="none" stroke="rgba(215,30,55,0.55)" stroke-width="1.00"/></svg>
<div class="" style="position:absolute;top:325.79px;line-height:12.84px;font-size:10.70px;white-space:nowrap;left:269.60px;width:600.00px;text-align:center;word-spacing:0.08em;"><b style="color:#222">33</b><span style="color:rgba(40,40,40,0.6)"><span style="margin:0 2.40px;color:rgba(40,40,40,0.75)">&nbsp;/&nbsp;</span><span style="letter-spacing:0.04em">23</span></span></div>
<svg style="position:absolute;left:619px;top:317px;width:102px;height:29px;overflow:visible"><rect x="1.76" y="1.00" width="99.12" height="26.02" fill="#fb4c5c"/></svg>
<svg style="position:absolute;left:618px;top:316px;width:104px;height:31px;overflow:visible"><rect x="3.26" y="2.50" width="98.12" height="25.02" rx="0.00" fill="none" stroke="rgba(215,30,55,0.55)" stroke-width="1.00"/></svg>
<div class="" style="position:absolute;top:325.79px;line-height:12.84px;font-size:10.70px;white-space:nowrap;left:370.16px;width:600.00px;text-align:center;word-spacing:0.08em;"><b style="color:#222">28</b><span style="color:rgba(40,40,40,0.6)"><span style="margin:0 2.40px;color:rgba(40,40,40,0.75)">&nbsp;/&nbsp;</span><span style="letter-spacing:0.04em">20</span></span></div>
<svg style="position:absolute;left:720px;top:317px;width:102px;height:29px;overflow:visible"><rect x="1.32" y="1.00" width="99.12" height="26.02" fill="#0cbf92"/></svg>
<div class="" style="position:absolute;top:325.79px;line-height:12.84px;font-size:10.70px;white-space:nowrap;left:470.72px;width:600.00px;text-align:center;word-spacing:0.08em;"><b style="color:#222">15</b><span style="color:rgba(40,40,40,0.6)"><span style="margin:0 2.40px;color:rgba(40,40,40,0.75)">&nbsp;/&nbsp;</span><span style="letter-spacing:0.04em">22</span></span></div>
<svg style="position:absolute;left:820px;top:317px;width:102px;height:29px;overflow:visible"><rect x="1.88" y="1.00" width="99.12" height="26.02" fill="#0cbf92"/></svg>
<div class="" style="position:absolute;top:325.79px;line-height:12.84px;font-size:10.70px;white-space:nowrap;left:571.28px;width:600.00px;text-align:center;word-spacing:0.08em;"><b style="color:#222">15</b><span style="color:rgba(40,40,40,0.6)"><span style="margin:0 2.40px;color:rgba(40,40,40,0.75)">&nbsp;/&nbsp;</span><span style="letter-spacing:0.04em">22</span></span></div>
<svg style="position:absolute;left:921px;top:317px;width:102px;height:29px;overflow:visible"><rect x="1.44" y="1.00" width="99.12" height="26.02" fill="#0cb046"/></svg>
<div class="" style="position:absolute;top:325.79px;line-height:12.84px;font-size:10.70px;white-space:nowrap;left:671.84px;width:600.00px;text-align:center;word-spacing:0.08em;"><b style="color:#222">15</b><span style="color:rgba(40,40,40,0.6)"><span style="margin:0 2.40px;color:rgba(40,40,40,0.75)">&nbsp;/&nbsp;</span><span style="letter-spacing:0.04em">21</span></span></div>
<svg style="position:absolute;left:1022px;top:317px;width:102px;height:29px;overflow:visible"><rect x="1.00" y="1.00" width="99.12" height="26.02" fill="#0cbf92"/></svg>
<div class="" style="position:absolute;top:325.79px;line-height:12.84px;font-size:10.70px;white-space:nowrap;left:772.40px;width:600.00px;text-align:center;word-spacing:0.08em;"><b style="color:#222">15</b><span style="color:rgba(40,40,40,0.6)"><span style="margin:0 2.40px;color:rgba(40,40,40,0.75)">&nbsp;/&nbsp;</span><span style="letter-spacing:0.04em">22</span></span></div>
<svg style="position:absolute;left:1122px;top:317px;width:102px;height:29px;overflow:visible"><rect x="1.56" y="1.00" width="99.12" height="26.02" fill="#08acde"/></svg>
<div class="" style="position:absolute;top:325.79px;line-height:12.84px;font-size:10.70px;white-space:nowrap;left:872.96px;width:600.00px;text-align:center;word-spacing:0.08em;"><b style="color:#222">0</b><span style="color:rgba(40,40,40,0.6)"><span style="margin:0 2.40px;color:rgba(40,40,40,0.75)">&nbsp;/&nbsp;</span><span style="letter-spacing:0.04em">23</span></span></div>
<svg style="position:absolute;left:1223px;top:317px;width:102px;height:29px;overflow:visible"><rect x="1.12" y="1.00" width="99.12" height="26.02" fill="#fb4c5c"/></svg>
<svg style="position:absolute;left:1222px;top:316px;width:104px;height:31px;overflow:visible"><rect x="2.62" y="2.50" width="98.12" height="25.02" rx="0.00" fill="none" stroke="rgba(215,30,55,0.55)" stroke-width="1.00"/></svg>
<div class="" style="position:absolute;top:325.79px;line-height:12.84px;font-size:10.70px;white-space:nowrap;left:973.52px;width:600.00px;text-align:center;word-spacing:0.08em;"><b style="color:#222">40</b><span style="color:rgba(40,40,40,0.6)"><span style="margin:0 2.40px;color:rgba(40,40,40,0.75)">&nbsp;/&nbsp;</span><span style="letter-spacing:0.04em">21</span></span></div>
<svg style="position:absolute;left:1323px;top:317px;width:102px;height:29px;overflow:visible"><rect x="1.68" y="1.00" width="99.12" height="26.02" fill="#fb4c5c"/></svg>
<svg style="position:absolute;left:1322px;top:316px;width:104px;height:31px;overflow:visible"><rect x="3.18" y="2.50" width="98.12" height="25.02" rx="0.00" fill="none" stroke="rgba(215,30,55,0.55)" stroke-width="1.00"/></svg>
<div class="" style="position:absolute;top:325.79px;line-height:12.84px;font-size:10.70px;white-space:nowrap;left:1074.08px;width:600.00px;text-align:center;word-spacing:0.08em;"><b style="color:#222">40</b><span style="color:rgba(40,40,40,0.6)"><span style="margin:0 2.40px;color:rgba(40,40,40,0.75)">&nbsp;/&nbsp;</span><span style="letter-spacing:0.04em">22</span></span></div>
<svg style="position:absolute;left:1424px;top:317px;width:102px;height:29px;overflow:visible"><rect x="1.24" y="1.00" width="99.12" height="26.02" fill="#08acde"/></svg>
<div class="" style="position:absolute;top:325.79px;line-height:12.84px;font-size:10.70px;white-space:nowrap;left:1174.64px;width:600.00px;text-align:center;word-spacing:0.08em;"><b style="color:#222">0</b><span style="color:rgba(40,40,40,0.6)"><span style="margin:0 2.40px;color:rgba(40,40,40,0.75)">&nbsp;/&nbsp;</span><span style="letter-spacing:0.04em">22</span></span></div>
<svg style="position:absolute;left:1524px;top:317px;width:102px;height:29px;overflow:visible"><rect x="1.80" y="1.00" width="99.12" height="26.02" fill="#08acde"/></svg>
<div class="" style="position:absolute;top:325.79px;line-height:12.84px;font-size:10.70px;white-space:nowrap;left:1275.20px;width:600.00px;text-align:center;word-spacing:0.08em;"><b style="color:#222">0</b><span style="color:rgba(40,40,40,0.6)"><span style="margin:0 2.40px;color:rgba(40,40,40,0.75)">&nbsp;/&nbsp;</span><span style="letter-spacing:0.04em">21</span></span></div>
<svg style="position:absolute;left:1625px;top:317px;width:102px;height:29px;overflow:visible"><rect x="1.36" y="1.00" width="99.12" height="26.02" fill="#08acde"/></svg>
<div class="" style="position:absolute;top:325.79px;line-height:12.84px;font-size:10.70px;white-space:nowrap;left:1375.76px;width:600.00px;text-align:center;word-spacing:0.08em;"><b style="color:#222">0</b><span style="color:rgba(40,40,40,0.6)"><span style="margin:0 2.40px;color:rgba(40,40,40,0.75)">&nbsp;/&nbsp;</span><span style="letter-spacing:0.04em">23</span></span></div>
<svg viewBox="0 0 24 15" style="position:absolute;left:244.00px;top:354.49px;width:14.40px;height:9.00px"><g fill="#4a4a4a" stroke="#4a4a4a" stroke-width="0.5"><circle cx="12" cy="3.4" r="3.0"/><circle cx="4.4" cy="6.4" r="1.9"/><circle cx="19.6" cy="6.4" r="1.9"/><path d="M6.3 14c0-3.4 2.3-5.6 5.7-5.6s5.700 2.200 5.700 5.600z"/><path d="M0.300 14c0-2.300 1.500-3.700 4.100-3.700.500 0 1 .100 1.500.200-.900 1-1.300 2.100-1.300 3.500z"/><path d="M23.700 14c0-2.300-1.500-3.700-4.100-3.700-.500 0-1 .100-1.500.200.900 1 1.300 2.100 1.300 3.500z"/></g></svg>
<div class="" style="position:absolute;top:352.53px;line-height:15.12px;font-size:12.60px;white-space:nowrap;left:264.00px;color:#505050;">My Directors</div>
<svg style="position:absolute;left:519px;top:344px;width:102px;height:29px;overflow:visible"><rect x="1.20" y="1.38" width="99.12" height="26.02" fill="#e3b63b"/></svg>
<div class="" style="position:absolute;top:353.17px;line-height:12.84px;font-size:10.70px;white-space:nowrap;left:269.60px;width:600.00px;text-align:center;word-spacing:0.08em;"><b style="color:#222">23</b><span style="color:rgba(40,40,40,0.6)"><span style="margin:0 2.40px;color:rgba(40,40,40,0.75)">&nbsp;/&nbsp;</span><span style="letter-spacing:0.04em">23</span></span></div>
<svg style="position:absolute;left:619px;top:344px;width:102px;height:29px;overflow:visible"><rect x="1.76" y="1.38" width="99.12" height="26.02" fill="#0cb046"/></svg>
<div class="" style="position:absolute;top:353.17px;line-height:12.84px;font-size:10.70px;white-space:nowrap;left:370.16px;width:600.00px;text-align:center;word-spacing:0.08em;"><b style="color:#222">15</b><span style="color:rgba(40,40,40,0.6)"><span style="margin:0 2.40px;color:rgba(40,40,40,0.75)">&nbsp;/&nbsp;</span><span style="letter-spacing:0.04em">20</span></span></div>
<svg style="position:absolute;left:720px;top:344px;width:102px;height:29px;overflow:visible"><rect x="1.32" y="1.38" width="99.12" height="26.02" fill="#0cb046"/></svg>
<div class="" style="position:absolute;top:353.17px;line-height:12.84px;font-size:10.70px;white-space:nowrap;left:470.72px;width:600.00px;text-align:center;word-spacing:0.08em;"><b style="color:#222">17</b><span style="color:rgba(40,40,40,0.6)"><span style="margin:0 2.40px;color:rgba(40,40,40,0.75)">&nbsp;/&nbsp;</span><span style="letter-spacing:0.04em">22</span></span></div>
<svg style="position:absolute;left:820px;top:344px;width:102px;height:29px;overflow:visible"><rect x="1.88" y="1.38" width="99.12" height="26.02" fill="#0cbf92"/></svg>
<div class="" style="position:absolute;top:353.17px;line-height:12.84px;font-size:10.70px;white-space:nowrap;left:571.28px;width:600.00px;text-align:center;word-spacing:0.08em;"><b style="color:#222">15</b><span style="color:rgba(40,40,40,0.6)"><span style="margin:0 2.40px;color:rgba(40,40,40,0.75)">&nbsp;/&nbsp;</span><span style="letter-spacing:0.04em">22</span></span></div>
<svg style="position:absolute;left:921px;top:344px;width:102px;height:29px;overflow:visible"><rect x="1.44" y="1.38" width="99.12" height="26.02" fill="#08acde"/></svg>
<div class="" style="position:absolute;top:353.17px;line-height:12.84px;font-size:10.70px;white-space:nowrap;left:671.84px;width:600.00px;text-align:center;word-spacing:0.08em;"><b style="color:#222">10</b><span style="color:rgba(40,40,40,0.6)"><span style="margin:0 2.40px;color:rgba(40,40,40,0.75)">&nbsp;/&nbsp;</span><span style="letter-spacing:0.04em">21</span></span></div>
<svg style="position:absolute;left:1022px;top:344px;width:102px;height:29px;overflow:visible"><rect x="1.00" y="1.38" width="99.12" height="26.02" fill="#08acde"/></svg>
<div class="" style="position:absolute;top:353.17px;line-height:12.84px;font-size:10.70px;white-space:nowrap;left:772.40px;width:600.00px;text-align:center;word-spacing:0.08em;"><b style="color:#222">10</b><span style="color:rgba(40,40,40,0.6)"><span style="margin:0 2.40px;color:rgba(40,40,40,0.75)">&nbsp;/&nbsp;</span><span style="letter-spacing:0.04em">22</span></span></div>
<svg style="position:absolute;left:1122px;top:344px;width:102px;height:29px;overflow:visible"><rect x="1.56" y="1.38" width="99.12" height="26.02" fill="#0cbf92"/></svg>
<div class="" style="position:absolute;top:353.17px;line-height:12.84px;font-size:10.70px;white-space:nowrap;left:872.96px;width:600.00px;text-align:center;word-spacing:0.08em;"><b style="color:#222">15</b><span style="color:rgba(40,40,40,0.6)"><span style="margin:0 2.40px;color:rgba(40,40,40,0.75)">&nbsp;/&nbsp;</span><span style="letter-spacing:0.04em">23</span></span></div>
<svg style="position:absolute;left:1223px;top:344px;width:102px;height:29px;overflow:visible"><rect x="1.12" y="1.38" width="99.12" height="26.02" fill="#08acde"/></svg>
<div class="" style="position:absolute;top:353.17px;line-height:12.84px;font-size:10.70px;white-space:nowrap;left:973.52px;width:600.00px;text-align:center;word-spacing:0.08em;"><b style="color:#222">10</b><span style="color:rgba(40,40,40,0.6)"><span style="margin:0 2.40px;color:rgba(40,40,40,0.75)">&nbsp;/&nbsp;</span><span style="letter-spacing:0.04em">21</span></span></div>
<svg style="position:absolute;left:1323px;top:344px;width:102px;height:29px;overflow:visible"><rect x="1.68" y="1.38" width="99.12" height="26.02" fill="#08acde"/></svg>
<div class="" style="position:absolute;top:353.17px;line-height:12.84px;font-size:10.70px;white-space:nowrap;left:1074.08px;width:600.00px;text-align:center;word-spacing:0.08em;"><b style="color:#222">0</b><span style="color:rgba(40,40,40,0.6)"><span style="margin:0 2.40px;color:rgba(40,40,40,0.75)">&nbsp;/&nbsp;</span><span style="letter-spacing:0.04em">22</span></span></div>
<svg style="position:absolute;left:1424px;top:344px;width:102px;height:29px;overflow:visible"><rect x="1.24" y="1.38" width="99.12" height="26.02" fill="#08acde"/></svg>
<div class="" style="position:absolute;top:353.17px;line-height:12.84px;font-size:10.70px;white-space:nowrap;left:1174.64px;width:600.00px;text-align:center;word-spacing:0.08em;"><b style="color:#222">0</b><span style="color:rgba(40,40,40,0.6)"><span style="margin:0 2.40px;color:rgba(40,40,40,0.75)">&nbsp;/&nbsp;</span><span style="letter-spacing:0.04em">22</span></span></div>
<svg style="position:absolute;left:1524px;top:344px;width:102px;height:29px;overflow:visible"><rect x="1.80" y="1.38" width="99.12" height="26.02" fill="#08acde"/></svg>
<div class="" style="position:absolute;top:353.17px;line-height:12.84px;font-size:10.70px;white-space:nowrap;left:1275.20px;width:600.00px;text-align:center;word-spacing:0.08em;"><b style="color:#222">0</b><span style="color:rgba(40,40,40,0.6)"><span style="margin:0 2.40px;color:rgba(40,40,40,0.75)">&nbsp;/&nbsp;</span><span style="letter-spacing:0.04em">21</span></span></div>
<svg style="position:absolute;left:1625px;top:344px;width:102px;height:29px;overflow:visible"><rect x="1.36" y="1.38" width="99.12" height="26.02" fill="#08acde"/></svg>
<div class="" style="position:absolute;top:353.17px;line-height:12.84px;font-size:10.70px;white-space:nowrap;left:1375.76px;width:600.00px;text-align:center;word-spacing:0.08em;"><b style="color:#222">0</b><span style="color:rgba(40,40,40,0.6)"><span style="margin:0 2.40px;color:rgba(40,40,40,0.75)">&nbsp;/&nbsp;</span><span style="letter-spacing:0.04em">23</span></span></div>
<svg viewBox="0 0 24 15" style="position:absolute;left:244.00px;top:381.87px;width:14.40px;height:9.00px"><g fill="#4a4a4a" stroke="#4a4a4a" stroke-width="0.5"><circle cx="12" cy="3.4" r="3.0"/><circle cx="4.4" cy="6.4" r="1.9"/><circle cx="19.6" cy="6.4" r="1.9"/><path d="M6.3 14c0-3.4 2.3-5.6 5.7-5.6s5.700 2.200 5.700 5.600z"/><path d="M0.300 14c0-2.300 1.500-3.700 4.100-3.700.500 0 1 .100 1.500.200-.900 1-1.300 2.100-1.300 3.500z"/><path d="M23.700 14c0-2.300-1.500-3.700-4.100-3.700-.500 0-1 .100-1.500.200.900 1 1.300 2.100 1.300 3.500z"/></g></svg>
<div class="" style="position:absolute;top:379.91px;line-height:15.12px;font-size:12.60px;white-space:nowrap;left:264.00px;color:#505050;">My Implementors</div>
<svg style="position:absolute;left:519px;top:371px;width:102px;height:29px;overflow:visible"><rect x="1.20" y="1.76" width="99.12" height="26.02" fill="#0cb046"/></svg>
<div class="" style="position:absolute;top:380.55px;line-height:12.84px;font-size:10.70px;white-space:nowrap;left:269.60px;width:600.00px;text-align:center;word-spacing:0.08em;"><b style="color:#222">17</b><span style="color:rgba(40,40,40,0.6)"><span style="margin:0 2.40px;color:rgba(40,40,40,0.75)">&nbsp;/&nbsp;</span><span style="letter-spacing:0.04em">23</span></span></div>
<svg style="position:absolute;left:619px;top:371px;width:102px;height:29px;overflow:visible"><rect x="1.76" y="1.76" width="99.12" height="26.02" fill="#fb4c5c"/></svg>
<svg style="position:absolute;left:618px;top:370px;width:104px;height:31px;overflow:visible"><rect x="3.26" y="3.26" width="98.12" height="25.02" rx="0.00" fill="none" stroke="rgba(215,30,55,0.55)" stroke-width="1.00"/></svg>
<div class="" style="position:absolute;top:380.55px;line-height:12.84px;font-size:10.70px;white-space:nowrap;left:370.16px;width:600.00px;text-align:center;word-spacing:0.08em;"><b style="color:#222">33</b><span style="color:rgba(40,40,40,0.6)"><span style="margin:0 2.40px;color:rgba(40,40,40,0.75)">&nbsp;/&nbsp;</span><span style="letter-spacing:0.04em">20</span></span></div>
<svg style="position:absolute;left:720px;top:371px;width:102px;height:29px;overflow:visible"><rect x="1.32" y="1.76" width="99.12" height="26.02" fill="#e3b63b"/></svg>
<div class="" style="position:absolute;top:380.55px;line-height:12.84px;font-size:10.70px;white-space:nowrap;left:470.72px;width:600.00px;text-align:center;word-spacing:0.08em;"><b style="color:#222">22</b><span style="color:rgba(40,40,40,0.6)"><span style="margin:0 2.40px;color:rgba(40,40,40,0.75)">&nbsp;/&nbsp;</span><span style="letter-spacing:0.04em">22</span></span></div>
<svg style="position:absolute;left:820px;top:371px;width:102px;height:29px;overflow:visible"><rect x="1.88" y="1.76" width="99.12" height="26.02" fill="#e3b63b"/></svg>
<div class="" style="position:absolute;top:380.55px;line-height:12.84px;font-size:10.70px;white-space:nowrap;left:571.28px;width:600.00px;text-align:center;word-spacing:0.08em;"><b style="color:#222">19</b><span style="color:rgba(40,40,40,0.6)"><span style="margin:0 2.40px;color:rgba(40,40,40,0.75)">&nbsp;/&nbsp;</span><span style="letter-spacing:0.04em">22</span></span></div>
<svg style="position:absolute;left:921px;top:371px;width:102px;height:29px;overflow:visible"><rect x="1.44" y="1.76" width="99.12" height="26.02" fill="#0cb046"/></svg>
<div class="" style="position:absolute;top:380.55px;line-height:12.84px;font-size:10.70px;white-space:nowrap;left:671.84px;width:600.00px;text-align:center;word-spacing:0.08em;"><b style="color:#222">17</b><span style="color:rgba(40,40,40,0.6)"><span style="margin:0 2.40px;color:rgba(40,40,40,0.75)">&nbsp;/&nbsp;</span><span style="letter-spacing:0.04em">21</span></span></div>
<svg style="position:absolute;left:1022px;top:371px;width:102px;height:29px;overflow:visible"><rect x="1.00" y="1.76" width="99.12" height="26.02" fill="#0cb046"/></svg>
<div class="" style="position:absolute;top:380.55px;line-height:12.84px;font-size:10.70px;white-space:nowrap;left:772.40px;width:600.00px;text-align:center;word-spacing:0.08em;"><b style="color:#222">17</b><span style="color:rgba(40,40,40,0.6)"><span style="margin:0 2.40px;color:rgba(40,40,40,0.75)">&nbsp;/&nbsp;</span><span style="letter-spacing:0.04em">22</span></span></div>
<svg style="position:absolute;left:1122px;top:371px;width:102px;height:29px;overflow:visible"><rect x="1.56" y="1.76" width="99.12" height="26.02" fill="#e3b63b"/></svg>
<div class="" style="position:absolute;top:380.55px;line-height:12.84px;font-size:10.70px;white-space:nowrap;left:872.96px;width:600.00px;text-align:center;word-spacing:0.08em;"><b style="color:#222">22</b><span style="color:rgba(40,40,40,0.6)"><span style="margin:0 2.40px;color:rgba(40,40,40,0.75)">&nbsp;/&nbsp;</span><span style="letter-spacing:0.04em">23</span></span></div>
<svg style="position:absolute;left:1223px;top:371px;width:102px;height:29px;overflow:visible"><rect x="1.12" y="1.76" width="99.12" height="26.02" fill="#08acde"/></svg>
<div class="" style="position:absolute;top:380.55px;line-height:12.84px;font-size:10.70px;white-space:nowrap;left:973.52px;width:600.00px;text-align:center;word-spacing:0.08em;"><b style="color:#222">10</b><span style="color:rgba(40,40,40,0.6)"><span style="margin:0 2.40px;color:rgba(40,40,40,0.75)">&nbsp;/&nbsp;</span><span style="letter-spacing:0.04em">21</span></span></div>
<svg style="position:absolute;left:1323px;top:371px;width:102px;height:29px;overflow:visible"><rect x="1.68" y="1.76" width="99.12" height="26.02" fill="#08acde"/></svg>
<div class="" style="position:absolute;top:380.55px;line-height:12.84px;font-size:10.70px;white-space:nowrap;left:1074.08px;width:600.00px;text-align:center;word-spacing:0.08em;"><b style="color:#222">10</b><span style="color:rgba(40,40,40,0.6)"><span style="margin:0 2.40px;color:rgba(40,40,40,0.75)">&nbsp;/&nbsp;</span><span style="letter-spacing:0.04em">22</span></span></div>
<svg style="position:absolute;left:1424px;top:371px;width:102px;height:29px;overflow:visible"><rect x="1.24" y="1.76" width="99.12" height="26.02" fill="#08acde"/></svg>
<div class="" style="position:absolute;top:380.55px;line-height:12.84px;font-size:10.70px;white-space:nowrap;left:1174.64px;width:600.00px;text-align:center;word-spacing:0.08em;"><b style="color:#222">10</b><span style="color:rgba(40,40,40,0.6)"><span style="margin:0 2.40px;color:rgba(40,40,40,0.75)">&nbsp;/&nbsp;</span><span style="letter-spacing:0.04em">22</span></span></div>
<svg style="position:absolute;left:1524px;top:371px;width:102px;height:29px;overflow:visible"><rect x="1.80" y="1.76" width="99.12" height="26.02" fill="#08acde"/></svg>
<div class="" style="position:absolute;top:380.55px;line-height:12.84px;font-size:10.70px;white-space:nowrap;left:1275.20px;width:600.00px;text-align:center;word-spacing:0.08em;"><b style="color:#222">10</b><span style="color:rgba(40,40,40,0.6)"><span style="margin:0 2.40px;color:rgba(40,40,40,0.75)">&nbsp;/&nbsp;</span><span style="letter-spacing:0.04em">21</span></span></div>
<svg style="position:absolute;left:1625px;top:371px;width:102px;height:29px;overflow:visible"><rect x="1.36" y="1.76" width="99.12" height="26.02" fill="#08acde"/></svg>
<div class="" style="position:absolute;top:380.55px;line-height:12.84px;font-size:10.70px;white-space:nowrap;left:1375.76px;width:600.00px;text-align:center;word-spacing:0.08em;"><b style="color:#222">0</b><span style="color:rgba(40,40,40,0.6)"><span style="margin:0 2.40px;color:rgba(40,40,40,0.75)">&nbsp;/&nbsp;</span><span style="letter-spacing:0.04em">23</span></span></div>
<svg viewBox="0 0 24 15" style="position:absolute;left:244.00px;top:409.25px;width:14.40px;height:9.00px"><g fill="#4a4a4a" stroke="#4a4a4a" stroke-width="0.5"><circle cx="12" cy="3.4" r="3.0"/><circle cx="4.4" cy="6.4" r="1.9"/><circle cx="19.6" cy="6.4" r="1.9"/><path d="M6.3 14c0-3.4 2.3-5.6 5.7-5.6s5.700 2.200 5.700 5.600z"/><path d="M0.300 14c0-2.300 1.500-3.700 4.100-3.700.500 0 1 .100 1.500.200-.900 1-1.300 2.100-1.300 3.500z"/><path d="M23.700 14c0-2.300-1.500-3.700-4.100-3.700-.500 0-1 .100-1.500.200.900 1 1.300 2.100 1.300 3.500z"/></g></svg>
<div class="" style="position:absolute;top:407.29px;line-height:15.12px;font-size:12.60px;white-space:nowrap;left:264.00px;color:#505050;">My PMs</div>
<svg style="position:absolute;left:519px;top:399px;width:102px;height:29px;overflow:visible"><rect x="1.20" y="1.14" width="99.12" height="26.02" fill="#fb4c5c"/></svg>
<svg style="position:absolute;left:518px;top:398px;width:104px;height:31px;overflow:visible"><rect x="2.70" y="2.64" width="98.12" height="25.02" rx="0.00" fill="none" stroke="rgba(215,30,55,0.55)" stroke-width="1.00"/></svg>
<div class="" style="position:absolute;top:407.93px;line-height:12.84px;font-size:10.70px;white-space:nowrap;left:269.60px;width:600.00px;text-align:center;word-spacing:0.08em;"><b style="color:#222">31</b><span style="color:rgba(40,40,40,0.6)"><span style="margin:0 2.40px;color:rgba(40,40,40,0.75)">&nbsp;/&nbsp;</span><span style="letter-spacing:0.04em">23</span></span></div>
<svg style="position:absolute;left:619px;top:399px;width:102px;height:29px;overflow:visible"><rect x="1.76" y="1.14" width="99.12" height="26.02" fill="#0cb046"/></svg>
<div class="" style="position:absolute;top:407.93px;line-height:12.84px;font-size:10.70px;white-space:nowrap;left:370.16px;width:600.00px;text-align:center;word-spacing:0.08em;"><b style="color:#222">15</b><span style="color:rgba(40,40,40,0.6)"><span style="margin:0 2.40px;color:rgba(40,40,40,0.75)">&nbsp;/&nbsp;</span><span style="letter-spacing:0.04em">20</span></span></div>
<svg style="position:absolute;left:720px;top:399px;width:102px;height:29px;overflow:visible"><rect x="1.32" y="1.14" width="99.12" height="26.02" fill="#0cbf92"/></svg>
<div class="" style="position:absolute;top:407.93px;line-height:12.84px;font-size:10.70px;white-space:nowrap;left:470.72px;width:600.00px;text-align:center;word-spacing:0.08em;"><b style="color:#222">12</b><span style="color:rgba(40,40,40,0.6)"><span style="margin:0 2.40px;color:rgba(40,40,40,0.75)">&nbsp;/&nbsp;</span><span style="letter-spacing:0.04em">22</span></span></div>
<svg style="position:absolute;left:820px;top:399px;width:102px;height:29px;overflow:visible"><rect x="1.88" y="1.14" width="99.12" height="26.02" fill="#e3b63b"/></svg>
<div class="" style="position:absolute;top:407.93px;line-height:12.84px;font-size:10.70px;white-space:nowrap;left:571.28px;width:600.00px;text-align:center;word-spacing:0.08em;"><b style="color:#222">20</b><span style="color:rgba(40,40,40,0.6)"><span style="margin:0 2.40px;color:rgba(40,40,40,0.75)">&nbsp;/&nbsp;</span><span style="letter-spacing:0.04em">22</span></span></div>
<svg style="position:absolute;left:921px;top:399px;width:102px;height:29px;overflow:visible"><rect x="1.44" y="1.14" width="99.12" height="26.02" fill="#fb4c5c"/></svg>
<svg style="position:absolute;left:920px;top:398px;width:104px;height:31px;overflow:visible"><rect x="2.94" y="2.64" width="98.12" height="25.02" rx="0.00" fill="none" stroke="rgba(215,30,55,0.55)" stroke-width="1.00"/></svg>
<div class="" style="position:absolute;top:407.93px;line-height:12.84px;font-size:10.70px;white-space:nowrap;left:671.84px;width:600.00px;text-align:center;word-spacing:0.08em;"><b style="color:#222">28</b><span style="color:rgba(40,40,40,0.6)"><span style="margin:0 2.40px;color:rgba(40,40,40,0.75)">&nbsp;/&nbsp;</span><span style="letter-spacing:0.04em">21</span></span></div>
<svg style="position:absolute;left:1022px;top:399px;width:102px;height:29px;overflow:visible"><rect x="1.00" y="1.14" width="99.12" height="26.02" fill="#0cbf92"/></svg>
<div class="" style="position:absolute;top:407.93px;line-height:12.84px;font-size:10.70px;white-space:nowrap;left:772.40px;width:600.00px;text-align:center;word-spacing:0.08em;"><b style="color:#222">15</b><span style="color:rgba(40,40,40,0.6)"><span style="margin:0 2.40px;color:rgba(40,40,40,0.75)">&nbsp;/&nbsp;</span><span style="letter-spacing:0.04em">22</span></span></div>
<svg style="position:absolute;left:1122px;top:399px;width:102px;height:29px;overflow:visible"><rect x="1.56" y="1.14" width="99.12" height="26.02" fill="#0cbf92"/></svg>
<div class="" style="position:absolute;top:407.93px;line-height:12.84px;font-size:10.70px;white-space:nowrap;left:872.96px;width:600.00px;text-align:center;word-spacing:0.08em;"><b style="color:#222">15</b><span style="color:rgba(40,40,40,0.6)"><span style="margin:0 2.40px;color:rgba(40,40,40,0.75)">&nbsp;/&nbsp;</span><span style="letter-spacing:0.04em">23</span></span></div>
<svg style="position:absolute;left:1223px;top:399px;width:102px;height:29px;overflow:visible"><rect x="1.12" y="1.14" width="99.12" height="26.02" fill="#08acde"/></svg>
<div class="" style="position:absolute;top:407.93px;line-height:12.84px;font-size:10.70px;white-space:nowrap;left:973.52px;width:600.00px;text-align:center;word-spacing:0.08em;"><b style="color:#222">5</b><span style="color:rgba(40,40,40,0.6)"><span style="margin:0 2.40px;color:rgba(40,40,40,0.75)">&nbsp;/&nbsp;</span><span style="letter-spacing:0.04em">21</span></span></div>
<svg style="position:absolute;left:1323px;top:399px;width:102px;height:29px;overflow:visible"><rect x="1.68" y="1.14" width="99.12" height="26.02" fill="#08acde"/></svg>
<div class="" style="position:absolute;top:407.93px;line-height:12.84px;font-size:10.70px;white-space:nowrap;left:1074.08px;width:600.00px;text-align:center;word-spacing:0.08em;"><b style="color:#222">5</b><span style="color:rgba(40,40,40,0.6)"><span style="margin:0 2.40px;color:rgba(40,40,40,0.75)">&nbsp;/&nbsp;</span><span style="letter-spacing:0.04em">22</span></span></div>
<svg style="position:absolute;left:1424px;top:399px;width:102px;height:29px;overflow:visible"><rect x="1.24" y="1.14" width="99.12" height="26.02" fill="#0cb046"/></svg>
<div class="" style="position:absolute;top:407.93px;line-height:12.84px;font-size:10.70px;white-space:nowrap;left:1174.64px;width:600.00px;text-align:center;word-spacing:0.08em;"><b style="color:#222">17</b><span style="color:rgba(40,40,40,0.6)"><span style="margin:0 2.40px;color:rgba(40,40,40,0.75)">&nbsp;/&nbsp;</span><span style="letter-spacing:0.04em">22</span></span></div>
<svg style="position:absolute;left:1524px;top:399px;width:102px;height:29px;overflow:visible"><rect x="1.80" y="1.14" width="99.12" height="26.02" fill="#0cb046"/></svg>
<div class="" style="position:absolute;top:407.93px;line-height:12.84px;font-size:10.70px;white-space:nowrap;left:1275.20px;width:600.00px;text-align:center;word-spacing:0.08em;"><b style="color:#222">15</b><span style="color:rgba(40,40,40,0.6)"><span style="margin:0 2.40px;color:rgba(40,40,40,0.75)">&nbsp;/&nbsp;</span><span style="letter-spacing:0.04em">21</span></span></div>
<svg style="position:absolute;left:1625px;top:399px;width:102px;height:29px;overflow:visible"><rect x="1.36" y="1.14" width="99.12" height="26.02" fill="#08acde"/></svg>
<div class="" style="position:absolute;top:407.93px;line-height:12.84px;font-size:10.70px;white-space:nowrap;left:1375.76px;width:600.00px;text-align:center;word-spacing:0.08em;"><b style="color:#222">0</b><span style="color:rgba(40,40,40,0.6)"><span style="margin:0 2.40px;color:rgba(40,40,40,0.75)">&nbsp;/&nbsp;</span><span style="letter-spacing:0.04em">23</span></span></div>
<svg viewBox="0 0 24 15" style="position:absolute;left:244.00px;top:436.63px;width:14.40px;height:9.00px"><g fill="#4a4a4a" stroke="#4a4a4a" stroke-width="0.5"><circle cx="12" cy="3.4" r="3.0"/><circle cx="4.4" cy="6.4" r="1.9"/><circle cx="19.6" cy="6.4" r="1.9"/><path d="M6.3 14c0-3.4 2.3-5.6 5.7-5.6s5.700 2.200 5.700 5.600z"/><path d="M0.300 14c0-2.300 1.500-3.700 4.100-3.700.500 0 1 .100 1.500.200-.900 1-1.300 2.100-1.300 3.500z"/><path d="M23.700 14c0-2.300-1.500-3.700-4.100-3.700-.500 0-1 .100-1.500.200.900 1 1.300 2.100 1.300 3.500z"/></g></svg>
<div class="" style="position:absolute;top:434.67px;line-height:15.12px;font-size:12.60px;white-space:nowrap;left:264.00px;color:#505050;">My Solution Architects</div>
<svg style="position:absolute;left:519px;top:426px;width:102px;height:29px;overflow:visible"><rect x="1.20" y="1.52" width="99.12" height="26.02" fill="#e3b63b"/></svg>
<div class="" style="position:absolute;top:435.31px;line-height:12.84px;font-size:10.70px;white-space:nowrap;left:269.60px;width:600.00px;text-align:center;word-spacing:0.08em;"><b style="color:#222">22</b><span style="color:rgba(40,40,40,0.6)"><span style="margin:0 2.40px;color:rgba(40,40,40,0.75)">&nbsp;/&nbsp;</span><span style="letter-spacing:0.04em">23</span></span></div>
<svg style="position:absolute;left:619px;top:426px;width:102px;height:29px;overflow:visible"><rect x="1.76" y="1.52" width="99.12" height="26.02" fill="#e3b63b"/></svg>
<div class="" style="position:absolute;top:435.31px;line-height:12.84px;font-size:10.70px;white-space:nowrap;left:370.16px;width:600.00px;text-align:center;word-spacing:0.08em;"><b style="color:#222">20</b><span style="color:rgba(40,40,40,0.6)"><span style="margin:0 2.40px;color:rgba(40,40,40,0.75)">&nbsp;/&nbsp;</span><span style="letter-spacing:0.04em">20</span></span></div>
<svg style="position:absolute;left:720px;top:426px;width:102px;height:29px;overflow:visible"><rect x="1.32" y="1.52" width="99.12" height="26.02" fill="#0cb046"/></svg>
<div class="" style="position:absolute;top:435.31px;line-height:12.84px;font-size:10.70px;white-space:nowrap;left:470.72px;width:600.00px;text-align:center;word-spacing:0.08em;"><b style="color:#222">18</b><span style="color:rgba(40,40,40,0.6)"><span style="margin:0 2.40px;color:rgba(40,40,40,0.75)">&nbsp;/&nbsp;</span><span style="letter-spacing:0.04em">22</span></span></div>
<svg style="position:absolute;left:820px;top:426px;width:102px;height:29px;overflow:visible"><rect x="1.88" y="1.52" width="99.12" height="26.02" fill="#08acde"/></svg>
<div class="" style="position:absolute;top:435.31px;line-height:12.84px;font-size:10.70px;white-space:nowrap;left:571.28px;width:600.00px;text-align:center;word-spacing:0.08em;"><b style="color:#222">5</b><span style="color:rgba(40,40,40,0.6)"><span style="margin:0 2.40px;color:rgba(40,40,40,0.75)">&nbsp;/&nbsp;</span><span style="letter-spacing:0.04em">22</span></span></div>
<svg style="position:absolute;left:921px;top:426px;width:102px;height:29px;overflow:visible"><rect x="1.44" y="1.52" width="99.12" height="26.02" fill="#e3b63b"/></svg>
<div class="" style="position:absolute;top:435.31px;line-height:12.84px;font-size:10.70px;white-space:nowrap;left:671.84px;width:600.00px;text-align:center;word-spacing:0.08em;"><b style="color:#222">20</b><span style="color:rgba(40,40,40,0.6)"><span style="margin:0 2.40px;color:rgba(40,40,40,0.75)">&nbsp;/&nbsp;</span><span style="letter-spacing:0.04em">21</span></span></div>
<svg style="position:absolute;left:1022px;top:426px;width:102px;height:29px;overflow:visible"><rect x="1.00" y="1.52" width="99.12" height="26.02" fill="#0cbf92"/></svg>
<div class="" style="position:absolute;top:435.31px;line-height:12.84px;font-size:10.70px;white-space:nowrap;left:772.40px;width:600.00px;text-align:center;word-spacing:0.08em;"><b style="color:#222">15</b><span style="color:rgba(40,40,40,0.6)"><span style="margin:0 2.40px;color:rgba(40,40,40,0.75)">&nbsp;/&nbsp;</span><span style="letter-spacing:0.04em">22</span></span></div>
<svg style="position:absolute;left:1122px;top:426px;width:102px;height:29px;overflow:visible"><rect x="1.56" y="1.52" width="99.12" height="26.02" fill="#08acde"/></svg>
<div class="" style="position:absolute;top:435.31px;line-height:12.84px;font-size:10.70px;white-space:nowrap;left:872.96px;width:600.00px;text-align:center;word-spacing:0.08em;"><b style="color:#222">10</b><span style="color:rgba(40,40,40,0.6)"><span style="margin:0 2.40px;color:rgba(40,40,40,0.75)">&nbsp;/&nbsp;</span><span style="letter-spacing:0.04em">23</span></span></div>
<svg style="position:absolute;left:1223px;top:426px;width:102px;height:29px;overflow:visible"><rect x="1.12" y="1.52" width="99.12" height="26.02" fill="#e3b63b"/></svg>
<div class="" style="position:absolute;top:435.31px;line-height:12.84px;font-size:10.70px;white-space:nowrap;left:973.52px;width:600.00px;text-align:center;word-spacing:0.08em;"><b style="color:#222">20</b><span style="color:rgba(40,40,40,0.6)"><span style="margin:0 2.40px;color:rgba(40,40,40,0.75)">&nbsp;/&nbsp;</span><span style="letter-spacing:0.04em">21</span></span></div>
<svg style="position:absolute;left:1323px;top:426px;width:102px;height:29px;overflow:visible"><rect x="1.68" y="1.52" width="99.12" height="26.02" fill="#e3b63b"/></svg>
<div class="" style="position:absolute;top:435.31px;line-height:12.84px;font-size:10.70px;white-space:nowrap;left:1074.08px;width:600.00px;text-align:center;word-spacing:0.08em;"><b style="color:#222">20</b><span style="color:rgba(40,40,40,0.6)"><span style="margin:0 2.40px;color:rgba(40,40,40,0.75)">&nbsp;/&nbsp;</span><span style="letter-spacing:0.04em">22</span></span></div>
<svg style="position:absolute;left:1424px;top:426px;width:102px;height:29px;overflow:visible"><rect x="1.24" y="1.52" width="99.12" height="26.02" fill="#0cbf92"/></svg>
<div class="" style="position:absolute;top:435.31px;line-height:12.84px;font-size:10.70px;white-space:nowrap;left:1174.64px;width:600.00px;text-align:center;word-spacing:0.08em;"><b style="color:#222">15</b><span style="color:rgba(40,40,40,0.6)"><span style="margin:0 2.40px;color:rgba(40,40,40,0.75)">&nbsp;/&nbsp;</span><span style="letter-spacing:0.04em">22</span></span></div>
<svg style="position:absolute;left:1524px;top:426px;width:102px;height:29px;overflow:visible"><rect x="1.80" y="1.52" width="99.12" height="26.02" fill="#08acde"/></svg>
<div class="" style="position:absolute;top:435.31px;line-height:12.84px;font-size:10.70px;white-space:nowrap;left:1275.20px;width:600.00px;text-align:center;word-spacing:0.08em;"><b style="color:#222">10</b><span style="color:rgba(40,40,40,0.6)"><span style="margin:0 2.40px;color:rgba(40,40,40,0.75)">&nbsp;/&nbsp;</span><span style="letter-spacing:0.04em">21</span></span></div>
<svg style="position:absolute;left:1625px;top:426px;width:102px;height:29px;overflow:visible"><rect x="1.36" y="1.52" width="99.12" height="26.02" fill="#08acde"/></svg>
<div class="" style="position:absolute;top:435.31px;line-height:12.84px;font-size:10.70px;white-space:nowrap;left:1375.76px;width:600.00px;text-align:center;word-spacing:0.08em;"><b style="color:#222">0</b><span style="color:rgba(40,40,40,0.6)"><span style="margin:0 2.40px;color:rgba(40,40,40,0.75)">&nbsp;/&nbsp;</span><span style="letter-spacing:0.04em">23</span></span></div>
<svg viewBox="0 0 24 15" style="position:absolute;left:244.00px;top:464.01px;width:14.40px;height:9.00px"><g fill="#4a4a4a" stroke="#4a4a4a" stroke-width="0.5"><circle cx="12" cy="3.4" r="3.0"/><circle cx="4.4" cy="6.4" r="1.9"/><circle cx="19.6" cy="6.4" r="1.9"/><path d="M6.3 14c0-3.4 2.3-5.6 5.7-5.6s5.700 2.200 5.700 5.600z"/><path d="M0.300 14c0-2.300 1.500-3.700 4.100-3.700.500 0 1 .100 1.500.200-.900 1-1.300 2.100-1.300 3.500z"/><path d="M23.700 14c0-2.300-1.500-3.700-4.100-3.700-.500 0-1 .100-1.500.200.900 1 1.300 2.100 1.300 3.500z"/></g></svg>
<div class="" style="position:absolute;top:462.05px;line-height:15.12px;font-size:12.60px;white-space:nowrap;left:264.00px;color:#505050;">My SW Architects</div>
<svg style="position:absolute;left:519px;top:453px;width:102px;height:29px;overflow:visible"><rect x="1.20" y="1.90" width="99.12" height="26.02" fill="#0cbf92"/></svg>
<div class="" style="position:absolute;top:462.69px;line-height:12.84px;font-size:10.70px;white-space:nowrap;left:269.60px;width:600.00px;text-align:center;word-spacing:0.08em;"><b style="color:#222">15</b><span style="color:rgba(40,40,40,0.6)"><span style="margin:0 2.40px;color:rgba(40,40,40,0.75)">&nbsp;/&nbsp;</span><span style="letter-spacing:0.04em">23</span></span></div>
<svg style="position:absolute;left:619px;top:453px;width:102px;height:29px;overflow:visible"><rect x="1.76" y="1.90" width="99.12" height="26.02" fill="#fb4c5c"/></svg>
<svg style="position:absolute;left:618px;top:452px;width:104px;height:31px;overflow:visible"><rect x="3.26" y="3.40" width="98.12" height="25.02" rx="0.00" fill="none" stroke="rgba(215,30,55,0.55)" stroke-width="1.00"/></svg>
<div class="" style="position:absolute;top:462.69px;line-height:12.84px;font-size:10.70px;white-space:nowrap;left:370.16px;width:600.00px;text-align:center;word-spacing:0.08em;"><b style="color:#222">25</b><span style="color:rgba(40,40,40,0.6)"><span style="margin:0 2.40px;color:rgba(40,40,40,0.75)">&nbsp;/&nbsp;</span><span style="letter-spacing:0.04em">20</span></span></div>
<svg style="position:absolute;left:720px;top:453px;width:102px;height:29px;overflow:visible"><rect x="1.32" y="1.90" width="99.12" height="26.02" fill="#e3b63b"/></svg>
<div class="" style="position:absolute;top:462.69px;line-height:12.84px;font-size:10.70px;white-space:nowrap;left:470.72px;width:600.00px;text-align:center;word-spacing:0.08em;"><b style="color:#222">20</b><span style="color:rgba(40,40,40,0.6)"><span style="margin:0 2.40px;color:rgba(40,40,40,0.75)">&nbsp;/&nbsp;</span><span style="letter-spacing:0.04em">22</span></span></div>
<svg style="position:absolute;left:820px;top:453px;width:102px;height:29px;overflow:visible"><rect x="1.88" y="1.90" width="99.12" height="26.02" fill="#fb4c5c"/></svg>
<svg style="position:absolute;left:819px;top:452px;width:104px;height:31px;overflow:visible"><rect x="3.38" y="3.40" width="98.12" height="25.02" rx="0.00" fill="none" stroke="rgba(215,30,55,0.55)" stroke-width="1.00"/></svg>
<div class="" style="position:absolute;top:462.69px;line-height:12.84px;font-size:10.70px;white-space:nowrap;left:571.28px;width:600.00px;text-align:center;word-spacing:0.08em;"><b style="color:#222">47</b><span style="color:rgba(40,40,40,0.6)"><span style="margin:0 2.40px;color:rgba(40,40,40,0.75)">&nbsp;/&nbsp;</span><span style="letter-spacing:0.04em">22</span></span></div>
<svg style="position:absolute;left:921px;top:453px;width:102px;height:29px;overflow:visible"><rect x="1.44" y="1.90" width="99.12" height="26.02" fill="#e3b63b"/></svg>
<div class="" style="position:absolute;top:462.69px;line-height:12.84px;font-size:10.70px;white-space:nowrap;left:671.84px;width:600.00px;text-align:center;word-spacing:0.08em;"><b style="color:#222">20</b><span style="color:rgba(40,40,40,0.6)"><span style="margin:0 2.40px;color:rgba(40,40,40,0.75)">&nbsp;/&nbsp;</span><span style="letter-spacing:0.04em">21</span></span></div>
<svg style="position:absolute;left:1022px;top:453px;width:102px;height:29px;overflow:visible"><rect x="1.00" y="1.90" width="99.12" height="26.02" fill="#e3b63b"/></svg>
<div class="" style="position:absolute;top:462.69px;line-height:12.84px;font-size:10.70px;white-space:nowrap;left:772.40px;width:600.00px;text-align:center;word-spacing:0.08em;"><b style="color:#222">20</b><span style="color:rgba(40,40,40,0.6)"><span style="margin:0 2.40px;color:rgba(40,40,40,0.75)">&nbsp;/&nbsp;</span><span style="letter-spacing:0.04em">22</span></span></div>
<svg style="position:absolute;left:1122px;top:453px;width:102px;height:29px;overflow:visible"><rect x="1.56" y="1.90" width="99.12" height="26.02" fill="#0cbf92"/></svg>
<div class="" style="position:absolute;top:462.69px;line-height:12.84px;font-size:10.70px;white-space:nowrap;left:872.96px;width:600.00px;text-align:center;word-spacing:0.08em;"><b style="color:#222">15</b><span style="color:rgba(40,40,40,0.6)"><span style="margin:0 2.40px;color:rgba(40,40,40,0.75)">&nbsp;/&nbsp;</span><span style="letter-spacing:0.04em">23</span></span></div>
<svg style="position:absolute;left:1223px;top:453px;width:102px;height:29px;overflow:visible"><rect x="1.12" y="1.90" width="99.12" height="26.02" fill="#08acde"/></svg>
<div class="" style="position:absolute;top:462.69px;line-height:12.84px;font-size:10.70px;white-space:nowrap;left:973.52px;width:600.00px;text-align:center;word-spacing:0.08em;"><b style="color:#222">0</b><span style="color:rgba(40,40,40,0.6)"><span style="margin:0 2.40px;color:rgba(40,40,40,0.75)">&nbsp;/&nbsp;</span><span style="letter-spacing:0.04em">21</span></span></div>
<svg style="position:absolute;left:1323px;top:453px;width:102px;height:29px;overflow:visible"><rect x="1.68" y="1.90" width="99.12" height="26.02" fill="#08acde"/></svg>
<div class="" style="position:absolute;top:462.69px;line-height:12.84px;font-size:10.70px;white-space:nowrap;left:1074.08px;width:600.00px;text-align:center;word-spacing:0.08em;"><b style="color:#222">0</b><span style="color:rgba(40,40,40,0.6)"><span style="margin:0 2.40px;color:rgba(40,40,40,0.75)">&nbsp;/&nbsp;</span><span style="letter-spacing:0.04em">22</span></span></div>
<svg style="position:absolute;left:1424px;top:453px;width:102px;height:29px;overflow:visible"><rect x="1.24" y="1.90" width="99.12" height="26.02" fill="#08acde"/></svg>
<div class="" style="position:absolute;top:462.69px;line-height:12.84px;font-size:10.70px;white-space:nowrap;left:1174.64px;width:600.00px;text-align:center;word-spacing:0.08em;"><b style="color:#222">0</b><span style="color:rgba(40,40,40,0.6)"><span style="margin:0 2.40px;color:rgba(40,40,40,0.75)">&nbsp;/&nbsp;</span><span style="letter-spacing:0.04em">22</span></span></div>
<svg style="position:absolute;left:1524px;top:453px;width:102px;height:29px;overflow:visible"><rect x="1.80" y="1.90" width="99.12" height="26.02" fill="#08acde"/></svg>
<div class="" style="position:absolute;top:462.69px;line-height:12.84px;font-size:10.70px;white-space:nowrap;left:1275.20px;width:600.00px;text-align:center;word-spacing:0.08em;"><b style="color:#222">0</b><span style="color:rgba(40,40,40,0.6)"><span style="margin:0 2.40px;color:rgba(40,40,40,0.75)">&nbsp;/&nbsp;</span><span style="letter-spacing:0.04em">21</span></span></div>
<svg style="position:absolute;left:1625px;top:453px;width:102px;height:29px;overflow:visible"><rect x="1.36" y="1.90" width="99.12" height="26.02" fill="#08acde"/></svg>
<div class="" style="position:absolute;top:462.69px;line-height:12.84px;font-size:10.70px;white-space:nowrap;left:1375.76px;width:600.00px;text-align:center;word-spacing:0.08em;"><b style="color:#222">0</b><span style="color:rgba(40,40,40,0.6)"><span style="margin:0 2.40px;color:rgba(40,40,40,0.75)">&nbsp;/&nbsp;</span><span style="letter-spacing:0.04em">23</span></span></div>
<svg viewBox="0 0 24 15" style="position:absolute;left:244.00px;top:491.39px;width:14.40px;height:9.00px"><g fill="#4a4a4a" stroke="#4a4a4a" stroke-width="0.5"><circle cx="12" cy="3.4" r="3.0"/><circle cx="4.4" cy="6.4" r="1.9"/><circle cx="19.6" cy="6.4" r="1.9"/><path d="M6.3 14c0-3.4 2.3-5.6 5.7-5.6s5.700 2.200 5.700 5.600z"/><path d="M0.300 14c0-2.300 1.500-3.700 4.100-3.700.500 0 1 .100 1.500.200-.900 1-1.300 2.100-1.300 3.500z"/><path d="M23.700 14c0-2.300-1.500-3.700-4.100-3.700-.500 0-1 .100-1.500.200.900 1 1.300 2.100 1.300 3.500z"/></g></svg>
<div class="" style="position:absolute;top:489.43px;line-height:15.12px;font-size:12.60px;white-space:nowrap;left:264.00px;color:#505050;">My SW Developers</div>
<svg style="position:absolute;left:519px;top:481px;width:102px;height:29px;overflow:visible"><rect x="1.20" y="1.28" width="99.12" height="26.02" fill="#e3b63b"/></svg>
<div class="" style="position:absolute;top:490.07px;line-height:12.84px;font-size:10.70px;white-space:nowrap;left:269.60px;width:600.00px;text-align:center;word-spacing:0.08em;"><b style="color:#222">23</b><span style="color:rgba(40,40,40,0.6)"><span style="margin:0 2.40px;color:rgba(40,40,40,0.75)">&nbsp;/&nbsp;</span><span style="letter-spacing:0.04em">23</span></span></div>
<svg style="position:absolute;left:619px;top:481px;width:102px;height:29px;overflow:visible"><rect x="1.76" y="1.28" width="99.12" height="26.02" fill="#e3b63b"/></svg>
<div class="" style="position:absolute;top:490.07px;line-height:12.84px;font-size:10.70px;white-space:nowrap;left:370.16px;width:600.00px;text-align:center;word-spacing:0.08em;"><b style="color:#222">20</b><span style="color:rgba(40,40,40,0.6)"><span style="margin:0 2.40px;color:rgba(40,40,40,0.75)">&nbsp;/&nbsp;</span><span style="letter-spacing:0.04em">20</span></span></div>
<svg style="position:absolute;left:720px;top:481px;width:102px;height:29px;overflow:visible"><rect x="1.32" y="1.28" width="99.12" height="26.02" fill="#fb4c5c"/></svg>
<svg style="position:absolute;left:719px;top:480px;width:104px;height:31px;overflow:visible"><rect x="2.82" y="2.78" width="98.12" height="25.02" rx="0.00" fill="none" stroke="rgba(215,30,55,0.55)" stroke-width="1.00"/></svg>
<div class="" style="position:absolute;top:490.07px;line-height:12.84px;font-size:10.70px;white-space:nowrap;left:470.72px;width:600.00px;text-align:center;word-spacing:0.08em;"><b style="color:#222">27</b><span style="color:rgba(40,40,40,0.6)"><span style="margin:0 2.40px;color:rgba(40,40,40,0.75)">&nbsp;/&nbsp;</span><span style="letter-spacing:0.04em">22</span></span></div>
<svg style="position:absolute;left:820px;top:481px;width:102px;height:29px;overflow:visible"><rect x="1.88" y="1.28" width="99.12" height="26.02" fill="#e3b63b"/></svg>
<div class="" style="position:absolute;top:490.07px;line-height:12.84px;font-size:10.70px;white-space:nowrap;left:571.28px;width:600.00px;text-align:center;word-spacing:0.08em;"><b style="color:#222">20</b><span style="color:rgba(40,40,40,0.6)"><span style="margin:0 2.40px;color:rgba(40,40,40,0.75)">&nbsp;/&nbsp;</span><span style="letter-spacing:0.04em">22</span></span></div>
<svg style="position:absolute;left:921px;top:481px;width:102px;height:29px;overflow:visible"><rect x="1.44" y="1.28" width="99.12" height="26.02" fill="#e3b63b"/></svg>
<div class="" style="position:absolute;top:490.07px;line-height:12.84px;font-size:10.70px;white-space:nowrap;left:671.84px;width:600.00px;text-align:center;word-spacing:0.08em;"><b style="color:#222">20</b><span style="color:rgba(40,40,40,0.6)"><span style="margin:0 2.40px;color:rgba(40,40,40,0.75)">&nbsp;/&nbsp;</span><span style="letter-spacing:0.04em">21</span></span></div>
<svg style="position:absolute;left:1022px;top:481px;width:102px;height:29px;overflow:visible"><rect x="1.00" y="1.28" width="99.12" height="26.02" fill="#e3b63b"/></svg>
<div class="" style="position:absolute;top:490.07px;line-height:12.84px;font-size:10.70px;white-space:nowrap;left:772.40px;width:600.00px;text-align:center;word-spacing:0.08em;"><b style="color:#222">20</b><span style="color:rgba(40,40,40,0.6)"><span style="margin:0 2.40px;color:rgba(40,40,40,0.75)">&nbsp;/&nbsp;</span><span style="letter-spacing:0.04em">22</span></span></div>
<svg style="position:absolute;left:1122px;top:481px;width:102px;height:29px;overflow:visible"><rect x="1.56" y="1.28" width="99.12" height="26.02" fill="#e3b63b"/></svg>
<div class="" style="position:absolute;top:490.07px;line-height:12.84px;font-size:10.70px;white-space:nowrap;left:872.96px;width:600.00px;text-align:center;word-spacing:0.08em;"><b style="color:#222">20</b><span style="color:rgba(40,40,40,0.6)"><span style="margin:0 2.40px;color:rgba(40,40,40,0.75)">&nbsp;/&nbsp;</span><span style="letter-spacing:0.04em">23</span></span></div>
<svg style="position:absolute;left:1223px;top:481px;width:102px;height:29px;overflow:visible"><rect x="1.12" y="1.28" width="99.12" height="26.02" fill="#0cb046"/></svg>
<div class="" style="position:absolute;top:490.07px;line-height:12.84px;font-size:10.70px;white-space:nowrap;left:973.52px;width:600.00px;text-align:center;word-spacing:0.08em;"><b style="color:#222">15</b><span style="color:rgba(40,40,40,0.6)"><span style="margin:0 2.40px;color:rgba(40,40,40,0.75)">&nbsp;/&nbsp;</span><span style="letter-spacing:0.04em">21</span></span></div>
<svg style="position:absolute;left:1323px;top:481px;width:102px;height:29px;overflow:visible"><rect x="1.68" y="1.28" width="99.12" height="26.02" fill="#e3b63b"/></svg>
<div class="" style="position:absolute;top:490.07px;line-height:12.84px;font-size:10.70px;white-space:nowrap;left:1074.08px;width:600.00px;text-align:center;word-spacing:0.08em;"><b style="color:#222">20</b><span style="color:rgba(40,40,40,0.6)"><span style="margin:0 2.40px;color:rgba(40,40,40,0.75)">&nbsp;/&nbsp;</span><span style="letter-spacing:0.04em">22</span></span></div>
<svg style="position:absolute;left:1424px;top:481px;width:102px;height:29px;overflow:visible"><rect x="1.24" y="1.28" width="99.12" height="26.02" fill="#08acde"/></svg>
<div class="" style="position:absolute;top:490.07px;line-height:12.84px;font-size:10.70px;white-space:nowrap;left:1174.64px;width:600.00px;text-align:center;word-spacing:0.08em;"><b style="color:#222">0</b><span style="color:rgba(40,40,40,0.6)"><span style="margin:0 2.40px;color:rgba(40,40,40,0.75)">&nbsp;/&nbsp;</span><span style="letter-spacing:0.04em">22</span></span></div>
<svg style="position:absolute;left:1524px;top:481px;width:102px;height:29px;overflow:visible"><rect x="1.80" y="1.28" width="99.12" height="26.02" fill="#08acde"/></svg>
<div class="" style="position:absolute;top:490.07px;line-height:12.84px;font-size:10.70px;white-space:nowrap;left:1275.20px;width:600.00px;text-align:center;word-spacing:0.08em;"><b style="color:#222">0</b><span style="color:rgba(40,40,40,0.6)"><span style="margin:0 2.40px;color:rgba(40,40,40,0.75)">&nbsp;/&nbsp;</span><span style="letter-spacing:0.04em">21</span></span></div>
<svg style="position:absolute;left:1625px;top:481px;width:102px;height:29px;overflow:visible"><rect x="1.36" y="1.28" width="99.12" height="26.02" fill="#08acde"/></svg>
<div class="" style="position:absolute;top:490.07px;line-height:12.84px;font-size:10.70px;white-space:nowrap;left:1375.76px;width:600.00px;text-align:center;word-spacing:0.08em;"><b style="color:#222">0</b><span style="color:rgba(40,40,40,0.6)"><span style="margin:0 2.40px;color:rgba(40,40,40,0.75)">&nbsp;/&nbsp;</span><span style="letter-spacing:0.04em">23</span></span></div>
<svg viewBox="0 0 24 15" style="position:absolute;left:244.00px;top:518.77px;width:14.40px;height:9.00px"><g fill="#4a4a4a" stroke="#4a4a4a" stroke-width="0.5"><circle cx="12" cy="3.4" r="3.0"/><circle cx="4.4" cy="6.4" r="1.9"/><circle cx="19.6" cy="6.4" r="1.9"/><path d="M6.3 14c0-3.4 2.3-5.6 5.7-5.6s5.700 2.200 5.700 5.600z"/><path d="M0.300 14c0-2.300 1.500-3.700 4.100-3.700.500 0 1 .100 1.500.200-.900 1-1.300 2.100-1.300 3.500z"/><path d="M23.700 14c0-2.300-1.500-3.700-4.100-3.700-.500 0-1 .100-1.500.200.900 1 1.300 2.100 1.300 3.500z"/></g></svg>
<div class="" style="position:absolute;top:516.81px;line-height:15.12px;font-size:12.60px;white-space:nowrap;left:264.00px;color:#505050;">My Testers</div>
<svg style="position:absolute;left:519px;top:508px;width:102px;height:29px;overflow:visible"><rect x="1.20" y="1.66" width="99.12" height="26.02" fill="#e3b63b"/></svg>
<div class="" style="position:absolute;top:517.45px;line-height:12.84px;font-size:10.70px;white-space:nowrap;left:269.60px;width:600.00px;text-align:center;word-spacing:0.08em;"><b style="color:#222">20</b><span style="color:rgba(40,40,40,0.6)"><span style="margin:0 2.40px;color:rgba(40,40,40,0.75)">&nbsp;/&nbsp;</span><span style="letter-spacing:0.04em">23</span></span></div>
<svg style="position:absolute;left:619px;top:508px;width:102px;height:29px;overflow:visible"><rect x="1.76" y="1.66" width="99.12" height="26.02" fill="#fb4c5c"/></svg>
<svg style="position:absolute;left:618px;top:507px;width:104px;height:31px;overflow:visible"><rect x="3.26" y="3.16" width="98.12" height="25.02" rx="0.00" fill="none" stroke="rgba(215,30,55,0.55)" stroke-width="1.00"/></svg>
<div class="" style="position:absolute;top:517.45px;line-height:12.84px;font-size:10.70px;white-space:nowrap;left:370.16px;width:600.00px;text-align:center;word-spacing:0.08em;"><b style="color:#222">27</b><span style="color:rgba(40,40,40,0.6)"><span style="margin:0 2.40px;color:rgba(40,40,40,0.75)">&nbsp;/&nbsp;</span><span style="letter-spacing:0.04em">20</span></span></div>
<svg style="position:absolute;left:720px;top:508px;width:102px;height:29px;overflow:visible"><rect x="1.32" y="1.66" width="99.12" height="26.02" fill="#08acde"/></svg>
<div class="" style="position:absolute;top:517.45px;line-height:12.84px;font-size:10.70px;white-space:nowrap;left:470.72px;width:600.00px;text-align:center;word-spacing:0.08em;"><b style="color:#222">10</b><span style="color:rgba(40,40,40,0.6)"><span style="margin:0 2.40px;color:rgba(40,40,40,0.75)">&nbsp;/&nbsp;</span><span style="letter-spacing:0.04em">22</span></span></div>
<svg style="position:absolute;left:820px;top:508px;width:102px;height:29px;overflow:visible"><rect x="1.88" y="1.66" width="99.12" height="26.02" fill="#08acde"/></svg>
<div class="" style="position:absolute;top:517.45px;line-height:12.84px;font-size:10.70px;white-space:nowrap;left:571.28px;width:600.00px;text-align:center;word-spacing:0.08em;"><b style="color:#222">10</b><span style="color:rgba(40,40,40,0.6)"><span style="margin:0 2.40px;color:rgba(40,40,40,0.75)">&nbsp;/&nbsp;</span><span style="letter-spacing:0.04em">22</span></span></div>
<svg style="position:absolute;left:921px;top:508px;width:102px;height:29px;overflow:visible"><rect x="1.44" y="1.66" width="99.12" height="26.02" fill="#08acde"/></svg>
<div class="" style="position:absolute;top:517.45px;line-height:12.84px;font-size:10.70px;white-space:nowrap;left:671.84px;width:600.00px;text-align:center;word-spacing:0.08em;"><b style="color:#222">10</b><span style="color:rgba(40,40,40,0.6)"><span style="margin:0 2.40px;color:rgba(40,40,40,0.75)">&nbsp;/&nbsp;</span><span style="letter-spacing:0.04em">21</span></span></div>
<svg style="position:absolute;left:1022px;top:508px;width:102px;height:29px;overflow:visible"><rect x="1.00" y="1.66" width="99.12" height="26.02" fill="#08acde"/></svg>
<div class="" style="position:absolute;top:517.45px;line-height:12.84px;font-size:10.70px;white-space:nowrap;left:772.40px;width:600.00px;text-align:center;word-spacing:0.08em;"><b style="color:#222">10</b><span style="color:rgba(40,40,40,0.6)"><span style="margin:0 2.40px;color:rgba(40,40,40,0.75)">&nbsp;/&nbsp;</span><span style="letter-spacing:0.04em">22</span></span></div>
<svg style="position:absolute;left:1122px;top:508px;width:102px;height:29px;overflow:visible"><rect x="1.56" y="1.66" width="99.12" height="26.02" fill="#08acde"/></svg>
<div class="" style="position:absolute;top:517.45px;line-height:12.84px;font-size:10.70px;white-space:nowrap;left:872.96px;width:600.00px;text-align:center;word-spacing:0.08em;"><b style="color:#222">10</b><span style="color:rgba(40,40,40,0.6)"><span style="margin:0 2.40px;color:rgba(40,40,40,0.75)">&nbsp;/&nbsp;</span><span style="letter-spacing:0.04em">23</span></span></div>
<svg style="position:absolute;left:1223px;top:508px;width:102px;height:29px;overflow:visible"><rect x="1.12" y="1.66" width="99.12" height="26.02" fill="#08acde"/></svg>
<div class="" style="position:absolute;top:517.45px;line-height:12.84px;font-size:10.70px;white-space:nowrap;left:973.52px;width:600.00px;text-align:center;word-spacing:0.08em;"><b style="color:#222">10</b><span style="color:rgba(40,40,40,0.6)"><span style="margin:0 2.40px;color:rgba(40,40,40,0.75)">&nbsp;/&nbsp;</span><span style="letter-spacing:0.04em">21</span></span></div>
<svg style="position:absolute;left:1323px;top:508px;width:102px;height:29px;overflow:visible"><rect x="1.68" y="1.66" width="99.12" height="26.02" fill="#e3b63b"/></svg>
<div class="" style="position:absolute;top:517.45px;line-height:12.84px;font-size:10.70px;white-space:nowrap;left:1074.08px;width:600.00px;text-align:center;word-spacing:0.08em;"><b style="color:#222">20</b><span style="color:rgba(40,40,40,0.6)"><span style="margin:0 2.40px;color:rgba(40,40,40,0.75)">&nbsp;/&nbsp;</span><span style="letter-spacing:0.04em">22</span></span></div>
<svg style="position:absolute;left:1424px;top:508px;width:102px;height:29px;overflow:visible"><rect x="1.24" y="1.66" width="99.12" height="26.02" fill="#08acde"/></svg>
<div class="" style="position:absolute;top:517.45px;line-height:12.84px;font-size:10.70px;white-space:nowrap;left:1174.64px;width:600.00px;text-align:center;word-spacing:0.08em;"><b style="color:#222">0</b><span style="color:rgba(40,40,40,0.6)"><span style="margin:0 2.40px;color:rgba(40,40,40,0.75)">&nbsp;/&nbsp;</span><span style="letter-spacing:0.04em">22</span></span></div>
<svg style="position:absolute;left:1524px;top:508px;width:102px;height:29px;overflow:visible"><rect x="1.80" y="1.66" width="99.12" height="26.02" fill="#08acde"/></svg>
<div class="" style="position:absolute;top:517.45px;line-height:12.84px;font-size:10.70px;white-space:nowrap;left:1275.20px;width:600.00px;text-align:center;word-spacing:0.08em;"><b style="color:#222">0</b><span style="color:rgba(40,40,40,0.6)"><span style="margin:0 2.40px;color:rgba(40,40,40,0.75)">&nbsp;/&nbsp;</span><span style="letter-spacing:0.04em">21</span></span></div>
<svg style="position:absolute;left:1625px;top:508px;width:102px;height:29px;overflow:visible"><rect x="1.36" y="1.66" width="99.12" height="26.02" fill="#08acde"/></svg>
<div class="" style="position:absolute;top:517.45px;line-height:12.84px;font-size:10.70px;white-space:nowrap;left:1375.76px;width:600.00px;text-align:center;word-spacing:0.08em;"><b style="color:#222">0</b><span style="color:rgba(40,40,40,0.6)"><span style="margin:0 2.40px;color:rgba(40,40,40,0.75)">&nbsp;/&nbsp;</span><span style="letter-spacing:0.04em">23</span></span></div>
<svg style="position:absolute;left:216px;top:546px;width:1491px;height:5px;overflow:visible"><rect x="1.20" y="1.60" width="1488.80" height="2.00" fill="#cfcfcf"/></svg>
<svg style="position:absolute;left:226px;top:566px;width:99px;height:36px;overflow:visible"><rect x="3.45" y="3.45" width="92.50" height="28.90" rx="4.00" fill="#fff" stroke="#858585" stroke-width="1.70"/></svg>
<div class="" style="position:absolute;top:578.46px;line-height:17.88px;font-size:14.90px;white-space:nowrap;left:241.80px;color:#333;-webkit-text-stroke:0.24px #333;">Mark As</div>
<div style="position:absolute;left:300.80px;top:585.60px;width:0;height:0;border-left:4.00px solid transparent;border-right:4.00px solid transparent;border-top:4.00px solid #333;"></div>
<svg style="position:absolute;left:216px;top:599px;width:1491px;height:29px;overflow:visible"><rect x="1.20" y="1.00" width="1488.80" height="26.60" fill="#f3f3f3"/></svg>
<svg style="position:absolute;left:216px;top:625px;width:1491px;height:4px;overflow:visible"><rect x="1.20" y="1.50" width="1488.80" height="1.30" fill="#dedede"/></svg>
<svg style="position:absolute;left:617px;top:599px;width:5px;height:29px;overflow:visible"><rect x="1.76" y="1.00" width="1.50" height="26.60" fill="rgba(255,255,255,0.55)"/></svg>
<svg style="position:absolute;left:718px;top:599px;width:4px;height:29px;overflow:visible"><rect x="1.32" y="1.00" width="1.50" height="26.60" fill="rgba(255,255,255,0.55)"/></svg>
<svg style="position:absolute;left:818px;top:599px;width:5px;height:29px;overflow:visible"><rect x="1.88" y="1.00" width="1.50" height="26.60" fill="rgba(255,255,255,0.55)"/></svg>
<svg style="position:absolute;left:919px;top:599px;width:4px;height:29px;overflow:visible"><rect x="1.44" y="1.00" width="1.50" height="26.60" fill="rgba(255,255,255,0.55)"/></svg>
<svg style="position:absolute;left:1020px;top:599px;width:4px;height:29px;overflow:visible"><rect x="1.00" y="1.00" width="1.50" height="26.60" fill="rgba(255,255,255,0.55)"/></svg>
<svg style="position:absolute;left:1120px;top:599px;width:5px;height:29px;overflow:visible"><rect x="1.56" y="1.00" width="1.50" height="26.60" fill="rgba(255,255,255,0.55)"/></svg>
<svg style="position:absolute;left:1221px;top:599px;width:4px;height:29px;overflow:visible"><rect x="1.12" y="1.00" width="1.50" height="26.60" fill="rgba(255,255,255,0.55)"/></svg>
<svg style="position:absolute;left:1321px;top:599px;width:5px;height:29px;overflow:visible"><rect x="1.68" y="1.00" width="1.50" height="26.60" fill="rgba(255,255,255,0.55)"/></svg>
<svg style="position:absolute;left:1422px;top:599px;width:4px;height:29px;overflow:visible"><rect x="1.24" y="1.00" width="1.50" height="26.60" fill="rgba(255,255,255,0.55)"/></svg>
<svg style="position:absolute;left:1522px;top:599px;width:5px;height:29px;overflow:visible"><rect x="1.80" y="1.00" width="1.50" height="26.60" fill="rgba(255,255,255,0.55)"/></svg>
<svg style="position:absolute;left:1623px;top:599px;width:4px;height:29px;overflow:visible"><rect x="1.36" y="1.00" width="1.50" height="26.60" fill="rgba(255,255,255,0.55)"/></svg>
<div class="" style="position:absolute;top:575.76px;line-height:14.88px;font-size:12.40px;white-space:nowrap;left:269.60px;width:600.00px;text-align:center;color:#3c3c3c;">JAN-2020</div>
<div class="" style="position:absolute;top:605.92px;line-height:14.16px;font-size:11.80px;white-space:nowrap;left:267.20px;width:600.00px;text-align:center;color:#222;font-weight:bold;">184</div>
<div class="" style="position:absolute;top:575.76px;line-height:14.88px;font-size:12.40px;white-space:nowrap;left:370.16px;width:600.00px;text-align:center;color:#3c3c3c;">FEB-2020</div>
<div class="" style="position:absolute;top:605.92px;line-height:14.16px;font-size:11.80px;white-space:nowrap;left:367.76px;width:600.00px;text-align:center;color:#222;font-weight:bold;">183</div>
<div class="" style="position:absolute;top:575.76px;line-height:14.88px;font-size:12.40px;white-space:nowrap;left:470.72px;width:600.00px;text-align:center;color:#222;font-weight:bold;">MAR-2020</div>
<div class="" style="position:absolute;top:605.92px;line-height:14.16px;font-size:11.80px;white-space:nowrap;left:468.32px;width:600.00px;text-align:center;color:#222;font-weight:bold;">141</div>
<div class="" style="position:absolute;top:575.76px;line-height:14.88px;font-size:12.40px;white-space:nowrap;left:571.28px;width:600.00px;text-align:center;color:#3c3c3c;">APR-2020</div>
<div class="" style="position:absolute;top:605.92px;line-height:14.16px;font-size:11.80px;white-space:nowrap;left:568.88px;width:600.00px;text-align:center;color:#222;font-weight:bold;">151</div>
<div class="" style="position:absolute;top:575.76px;line-height:14.88px;font-size:12.40px;white-space:nowrap;left:671.84px;width:600.00px;text-align:center;color:#3c3c3c;">MAY-2020</div>
<div class="" style="position:absolute;top:605.92px;line-height:14.16px;font-size:11.80px;white-space:nowrap;left:669.44px;width:600.00px;text-align:center;color:#222;font-weight:bold;">140</div>
<div class="" style="position:absolute;top:575.76px;line-height:14.88px;font-size:12.40px;white-space:nowrap;left:772.40px;width:600.00px;text-align:center;color:#3c3c3c;">JUN-2020</div>
<div class="" style="position:absolute;top:605.92px;line-height:14.16px;font-size:11.80px;white-space:nowrap;left:770.00px;width:600.00px;text-align:center;color:#222;font-weight:bold;">122</div>
<div class="" style="position:absolute;top:575.76px;line-height:14.88px;font-size:12.40px;white-space:nowrap;left:872.96px;width:600.00px;text-align:center;color:#3c3c3c;">JUL-2020</div>
<div class="" style="position:absolute;top:605.92px;line-height:14.16px;font-size:11.80px;white-space:nowrap;left:870.56px;width:600.00px;text-align:center;color:#222;font-weight:bold;">107</div>
<div class="" style="position:absolute;top:575.76px;line-height:14.88px;font-size:12.40px;white-space:nowrap;left:973.52px;width:600.00px;text-align:center;color:#3c3c3c;">AUG-2020</div>
<div class="" style="position:absolute;top:605.92px;line-height:14.16px;font-size:11.80px;white-space:nowrap;left:971.12px;width:600.00px;text-align:center;color:#222;font-weight:bold;">110</div>
<div class="" style="position:absolute;top:575.76px;line-height:14.88px;font-size:12.40px;white-space:nowrap;left:1074.08px;width:600.00px;text-align:center;color:#3c3c3c;">SEP-2020</div>
<div class="" style="position:absolute;top:605.92px;line-height:14.16px;font-size:11.80px;white-space:nowrap;left:1071.68px;width:600.00px;text-align:center;color:#222;font-weight:bold;">115</div>
<div class="" style="position:absolute;top:575.76px;line-height:14.88px;font-size:12.40px;white-space:nowrap;left:1174.64px;width:600.00px;text-align:center;color:#3c3c3c;">OCT-2020</div>
<div class="" style="position:absolute;top:605.92px;line-height:14.16px;font-size:11.80px;white-space:nowrap;left:1172.24px;width:600.00px;text-align:center;color:#222;font-weight:bold;">42</div>
<div class="" style="position:absolute;top:575.76px;line-height:14.88px;font-size:12.40px;white-space:nowrap;left:1275.20px;width:600.00px;text-align:center;color:#3c3c3c;">NOV-2020</div>
<div class="" style="position:absolute;top:605.92px;line-height:14.16px;font-size:11.80px;white-space:nowrap;left:1272.80px;width:600.00px;text-align:center;color:#222;font-weight:bold;">35</div>
<div class="" style="position:absolute;top:575.76px;line-height:14.88px;font-size:12.40px;white-space:nowrap;left:1375.76px;width:600.00px;text-align:center;color:#3c3c3c;">DEC-2020</div>
<div class="" style="position:absolute;top:605.92px;line-height:14.16px;font-size:11.80px;white-space:nowrap;left:1373.36px;width:600.00px;text-align:center;color:#222;font-weight:bold;">0</div>
<svg viewBox="0 0 8 12" style="position:absolute;left:226.20px;top:605.80px;width:7.40px;height:10.40px"><path d="M1.3 1L6.7 6L1.3 11" fill="none" stroke="#a0a0a0" stroke-width="1.7"/></svg>
<svg viewBox="0 0 12 12" style="position:absolute;left:247.00px;top:604.60px;width:12.80px;height:12.80px"><g fill="none" stroke="#333" stroke-width="2.1"><path d="M3.2 0.5V10"/><path d="M8.8 11.5V2"/></g><path d="M0.3 8L3.2 11.8L6.1 8z" fill="#333"/><path d="M5.9 4L8.8 0.2L11.7 4z" fill="#333"/></svg>
<div class="" style="position:absolute;top:604.86px;line-height:14.28px;font-size:11.90px;white-space:nowrap;left:293.40px;font-weight:bold;color:#333;">Demand</div>
<svg viewBox="0 0 12 12" style="position:absolute;left:349.80px;top:606.00px;width:13.20px;height:13.20px"><path d="M0.5 0.5h11v1.6L7.3 6.3V11.5H4.7V6.3L0.5 2.1z" fill="#555"/></svg>
<svg viewBox="0 0 12 12" style="position:absolute;left:500.20px;top:606.80px;width:11.60px;height:11.60px"><circle cx="6" cy="6" r="3.7" fill="none" stroke="#333" stroke-width="2.9"/><g stroke="#333" stroke-width="2"><path d="M6 0v12M0 6h12M1.8 1.8l8.4 8.4M10.2 1.8l-8.4 8.4" stroke-dasharray="1.4 9.2 1.4 0"/></g></svg>
<svg style="position:absolute;left:216px;top:626px;width:1491px;height:29px;overflow:visible"><rect x="1.20" y="1.90" width="1488.80" height="25.84" fill="#f3f3f3"/></svg>
<svg style="position:absolute;left:216px;top:652px;width:1491px;height:5px;overflow:visible"><rect x="1.20" y="1.64" width="1488.80" height="1.50" fill="#dedede"/></svg>
<svg viewBox="0 0 8 12" style="position:absolute;left:226.20px;top:634.00px;width:7.40px;height:10.40px"><path d="M1.3 1L6.7 6L1.3 11" fill="none" stroke="#a0a0a0" stroke-width="1.7"/></svg>
<svg style="position:absolute;left:239px;top:630px;width:32px;height:21px;overflow:visible"><rect x="1.80" y="1.40" width="28.40" height="18.00" rx="4.00" fill="#1c70c4"/></svg>
<div class="" style="position:absolute;top:633.14px;line-height:16.32px;font-size:13.60px;white-space:nowrap;left:-45.10px;width:600.00px;text-align:center;color:#fff;letter-spacing:-0.03em;-webkit-text-stroke:0.20px #fff;">100</div>
<div class="" style="position:absolute;left:276.40px;top:634.00px;width:13.40px;height:11.40px;border:1.40px solid #7ea3da;border-radius:1.40px;box-sizing:border-box;"></div>
<svg style="position:absolute;left:279px;top:631px;width:8px;height:5px;overflow:visible"><rect x="1.60" y="1.40" width="5.00" height="2.20" rx="0.80" fill="#7ea3da"/></svg>
<div class="" style="position:absolute;top:632.44px;line-height:15.12px;font-size:12.60px;white-space:nowrap;left:298.40px;color:#1a8a8a;">My Project 1</div>
<div class="" style="position:absolute;left:480.60px;top:633.60px;width:14.80px;height:14.00px;border:1.00px solid #c4c4c4;border-radius:1.80px;box-sizing:border-box;background:#f8f8f8;"></div>
<div style="position:absolute;left:485.80px;top:636.70px;width:0;height:0;border-top:4.10px solid transparent;border-bottom:4.10px solid transparent;border-left:6.40px solid #222;"></div>
<div class="" style="position:absolute;left:505.40px;top:634.80px;width:2.60px;height:2.60px;background:#3a3a3a;border-radius:50%;"></div>
<div class="" style="position:absolute;left:505.40px;top:639.10px;width:2.60px;height:2.60px;background:#3a3a3a;border-radius:50%;"></div>
<div class="" style="position:absolute;left:505.40px;top:643.40px;width:2.60px;height:2.60px;background:#3a3a3a;border-radius:50%;"></div>
<svg style="position:absolute;left:0;top:0;width:1706.00px;height:960.00px;overflow:visible;pointer-events:none" viewBox="0 0 1706 960"><polygon points="519.80,628.10 1523.40,628.10 1523.40,638.50 1517.40,631.60 527.60,631.60 519.80,639.70" fill="#6db1f6"/></svg>
<svg style="position:absolute;left:617px;top:626px;width:5px;height:29px;overflow:visible"><rect x="1.76" y="1.90" width="1.50" height="25.84" fill="rgba(255,255,255,0.55)"/></svg>
<svg style="position:absolute;left:718px;top:626px;width:4px;height:29px;overflow:visible"><rect x="1.32" y="1.90" width="1.50" height="25.84" fill="rgba(255,255,255,0.55)"/></svg>
<svg style="position:absolute;left:818px;top:626px;width:5px;height:29px;overflow:visible"><rect x="1.88" y="1.90" width="1.50" height="25.84" fill="rgba(255,255,255,0.55)"/></svg>
<svg style="position:absolute;left:919px;top:626px;width:4px;height:29px;overflow:visible"><rect x="1.44" y="1.90" width="1.50" height="25.84" fill="rgba(255,255,255,0.55)"/></svg>
<svg style="position:absolute;left:1020px;top:626px;width:4px;height:29px;overflow:visible"><rect x="1.00" y="1.90" width="1.50" height="25.84" fill="rgba(255,255,255,0.55)"/></svg>
<svg style="position:absolute;left:1120px;top:626px;width:5px;height:29px;overflow:visible"><rect x="1.56" y="1.90" width="1.50" height="25.84" fill="rgba(255,255,255,0.55)"/></svg>
<svg style="position:absolute;left:1221px;top:626px;width:4px;height:29px;overflow:visible"><rect x="1.12" y="1.90" width="1.50" height="25.84" fill="rgba(255,255,255,0.55)"/></svg>
<svg style="position:absolute;left:1321px;top:626px;width:5px;height:29px;overflow:visible"><rect x="1.68" y="1.90" width="1.50" height="25.84" fill="rgba(255,255,255,0.55)"/></svg>
<svg style="position:absolute;left:1422px;top:626px;width:4px;height:29px;overflow:visible"><rect x="1.24" y="1.90" width="1.50" height="25.84" fill="rgba(255,255,255,0.55)"/></svg>
<svg style="position:absolute;left:1522px;top:626px;width:5px;height:29px;overflow:visible"><rect x="1.80" y="1.90" width="1.50" height="25.84" fill="rgba(255,255,255,0.55)"/></svg>
<svg style="position:absolute;left:1623px;top:626px;width:4px;height:29px;overflow:visible"><rect x="1.36" y="1.90" width="1.50" height="25.84" fill="rgba(255,255,255,0.55)"/></svg>
<div class="" style="position:absolute;top:632.92px;line-height:15.36px;font-size:12.80px;white-space:nowrap;left:267.40px;width:600.00px;text-align:center;color:#333;letter-spacing:-0.045em;">15</div>
<div class="" style="position:absolute;top:632.92px;line-height:15.36px;font-size:12.80px;white-space:nowrap;left:367.96px;width:600.00px;text-align:center;color:#333;letter-spacing:-0.045em;">42</div>
<div class="" style="position:absolute;top:632.92px;line-height:15.36px;font-size:12.80px;white-space:nowrap;left:468.52px;width:600.00px;text-align:center;color:#333;letter-spacing:-0.045em;">59</div>
<div class="" style="position:absolute;top:632.92px;line-height:15.36px;font-size:12.80px;white-space:nowrap;left:569.08px;width:600.00px;text-align:center;color:#333;letter-spacing:-0.045em;">62</div>
<div class="" style="position:absolute;top:632.92px;line-height:15.36px;font-size:12.80px;white-space:nowrap;left:669.64px;width:600.00px;text-align:center;color:#333;letter-spacing:-0.045em;">62</div>
<div class="" style="position:absolute;top:632.92px;line-height:15.36px;font-size:12.80px;white-space:nowrap;left:770.20px;width:600.00px;text-align:center;color:#333;letter-spacing:-0.045em;">62</div>
<div class="" style="position:absolute;top:632.92px;line-height:15.36px;font-size:12.80px;white-space:nowrap;left:870.76px;width:600.00px;text-align:center;color:#333;letter-spacing:-0.045em;">52</div>
<div class="" style="position:absolute;top:632.92px;line-height:15.36px;font-size:12.80px;white-space:nowrap;left:971.32px;width:600.00px;text-align:center;color:#333;letter-spacing:-0.045em;">30</div>
<div class="" style="position:absolute;top:632.92px;line-height:15.36px;font-size:12.80px;white-space:nowrap;left:1071.88px;width:600.00px;text-align:center;color:#333;letter-spacing:-0.045em;">60</div>
<div class="" style="position:absolute;top:632.92px;line-height:15.36px;font-size:12.80px;white-space:nowrap;left:1172.44px;width:600.00px;text-align:center;color:#333;letter-spacing:-0.045em;">2</div>
<div class="" style="position:absolute;top:632.92px;line-height:15.36px;font-size:12.80px;white-space:nowrap;left:1273.00px;width:600.00px;text-align:center;color:#333;letter-spacing:-0.045em;">-</div>
<div class="" style="position:absolute;top:632.92px;line-height:15.36px;font-size:12.80px;white-space:nowrap;left:1373.56px;width:600.00px;text-align:center;color:#333;letter-spacing:-0.045em;">-</div>
<svg style="position:absolute;left:216px;top:654px;width:1491px;height:28px;overflow:visible"><rect x="1.20" y="1.14" width="1488.80" height="25.84" fill="#f3f3f3"/></svg>
<svg style="position:absolute;left:216px;top:679px;width:1491px;height:5px;overflow:visible"><rect x="1.20" y="1.88" width="1488.80" height="1.50" fill="#dedede"/></svg>
<svg viewBox="0 0 8 12" style="position:absolute;left:226.20px;top:661.24px;width:7.40px;height:10.40px"><path d="M1.3 1L6.7 6L1.3 11" fill="none" stroke="#a0a0a0" stroke-width="1.7"/></svg>
<svg style="position:absolute;left:239px;top:657px;width:32px;height:21px;overflow:visible"><rect x="1.80" y="1.64" width="28.40" height="18.00" rx="4.00" fill="#1c70c4"/></svg>
<div class="" style="position:absolute;top:660.38px;line-height:16.32px;font-size:13.60px;white-space:nowrap;left:-45.10px;width:600.00px;text-align:center;color:#fff;letter-spacing:-0.03em;-webkit-text-stroke:0.20px #fff;">200</div>
<div class="" style="position:absolute;left:276.40px;top:661.24px;width:13.40px;height:11.40px;border:1.40px solid #7ea3da;border-radius:1.40px;box-sizing:border-box;"></div>
<svg style="position:absolute;left:279px;top:658px;width:8px;height:5px;overflow:visible"><rect x="1.60" y="1.64" width="5.00" height="2.20" rx="0.80" fill="#7ea3da"/></svg>
<div class="" style="position:absolute;top:659.68px;line-height:15.12px;font-size:12.60px;white-space:nowrap;left:298.40px;color:#1a8a8a;">My Project 3</div>
<div class="" style="position:absolute;left:480.60px;top:660.84px;width:14.80px;height:14.00px;border:1.00px solid #c4c4c4;border-radius:1.80px;box-sizing:border-box;background:#f8f8f8;"></div>
<div style="position:absolute;left:485.80px;top:663.94px;width:0;height:0;border-top:4.10px solid transparent;border-bottom:4.10px solid transparent;border-left:6.40px solid #222;"></div>
<div class="" style="position:absolute;left:505.40px;top:662.04px;width:2.60px;height:2.60px;background:#3a3a3a;border-radius:50%;"></div>
<div class="" style="position:absolute;left:505.40px;top:666.34px;width:2.60px;height:2.60px;background:#3a3a3a;border-radius:50%;"></div>
<div class="" style="position:absolute;left:505.40px;top:670.64px;width:2.60px;height:2.60px;background:#3a3a3a;border-radius:50%;"></div>
<svg style="position:absolute;left:0;top:0;width:1706.00px;height:960.00px;overflow:visible;pointer-events:none" viewBox="0 0 1706 960"><polygon points="519.80,655.34 1623.96,655.34 1623.96,665.74 1617.96,658.84 527.60,658.84 519.80,666.94" fill="#6db1f6"/></svg>
<svg style="position:absolute;left:617px;top:654px;width:5px;height:28px;overflow:visible"><rect x="1.76" y="1.14" width="1.50" height="25.84" fill="rgba(255,255,255,0.55)"/></svg>
<svg style="position:absolute;left:718px;top:654px;width:4px;height:28px;overflow:visible"><rect x="1.32" y="1.14" width="1.50" height="25.84" fill="rgba(255,255,255,0.55)"/></svg>
<svg style="position:absolute;left:818px;top:654px;width:5px;height:28px;overflow:visible"><rect x="1.88" y="1.14" width="1.50" height="25.84" fill="rgba(255,255,255,0.55)"/></svg>
<svg style="position:absolute;left:919px;top:654px;width:4px;height:28px;overflow:visible"><rect x="1.44" y="1.14" width="1.50" height="25.84" fill="rgba(255,255,255,0.55)"/></svg>
<svg style="position:absolute;left:1020px;top:654px;width:4px;height:28px;overflow:visible"><rect x="1.00" y="1.14" width="1.50" height="25.84" fill="rgba(255,255,255,0.55)"/></svg>
<svg style="position:absolute;left:1120px;top:654px;width:5px;height:28px;overflow:visible"><rect x="1.56" y="1.14" width="1.50" height="25.84" fill="rgba(255,255,255,0.55)"/></svg>
<svg style="position:absolute;left:1221px;top:654px;width:4px;height:28px;overflow:visible"><rect x="1.12" y="1.14" width="1.50" height="25.84" fill="rgba(255,255,255,0.55)"/></svg>
<svg style="position:absolute;left:1321px;top:654px;width:5px;height:28px;overflow:visible"><rect x="1.68" y="1.14" width="1.50" height="25.84" fill="rgba(255,255,255,0.55)"/></svg>
<svg style="position:absolute;left:1422px;top:654px;width:4px;height:28px;overflow:visible"><rect x="1.24" y="1.14" width="1.50" height="25.84" fill="rgba(255,255,255,0.55)"/></svg>
<svg style="position:absolute;left:1522px;top:654px;width:5px;height:28px;overflow:visible"><rect x="1.80" y="1.14" width="1.50" height="25.84" fill="rgba(255,255,255,0.55)"/></svg>
<svg style="position:absolute;left:1623px;top:654px;width:4px;height:28px;overflow:visible"><rect x="1.36" y="1.14" width="1.50" height="25.84" fill="rgba(255,255,255,0.55)"/></svg>
<div class="" style="position:absolute;top:660.16px;line-height:15.36px;font-size:12.80px;white-space:nowrap;left:267.40px;width:600.00px;text-align:center;color:#333;letter-spacing:-0.045em;">15</div>
<div class="" style="position:absolute;top:660.16px;line-height:15.36px;font-size:12.80px;white-space:nowrap;left:367.96px;width:600.00px;text-align:center;color:#333;letter-spacing:-0.045em;">15</div>
<div class="" style="position:absolute;top:660.16px;line-height:15.36px;font-size:12.80px;white-space:nowrap;left:468.52px;width:600.00px;text-align:center;color:#333;letter-spacing:-0.045em;">20</div>
<div class="" style="position:absolute;top:660.16px;line-height:15.36px;font-size:12.80px;white-space:nowrap;left:569.08px;width:600.00px;text-align:center;color:#333;letter-spacing:-0.045em;">15</div>
<div class="" style="position:absolute;top:660.16px;line-height:15.36px;font-size:12.80px;white-space:nowrap;left:669.64px;width:600.00px;text-align:center;color:#333;letter-spacing:-0.045em;">35</div>
<div class="" style="position:absolute;top:660.16px;line-height:15.36px;font-size:12.80px;white-space:nowrap;left:770.20px;width:600.00px;text-align:center;color:#333;letter-spacing:-0.045em;">30</div>
<div class="" style="position:absolute;top:660.16px;line-height:15.36px;font-size:12.80px;white-space:nowrap;left:870.76px;width:600.00px;text-align:center;color:#333;letter-spacing:-0.045em;">25</div>
<div class="" style="position:absolute;top:660.16px;line-height:15.36px;font-size:12.80px;white-space:nowrap;left:971.32px;width:600.00px;text-align:center;color:#333;letter-spacing:-0.045em;">55</div>
<div class="" style="position:absolute;top:660.16px;line-height:15.36px;font-size:12.80px;white-space:nowrap;left:1071.88px;width:600.00px;text-align:center;color:#333;letter-spacing:-0.045em;">55</div>
<div class="" style="position:absolute;top:660.16px;line-height:15.36px;font-size:12.80px;white-space:nowrap;left:1172.44px;width:600.00px;text-align:center;color:#333;letter-spacing:-0.045em;">40</div>
<div class="" style="position:absolute;top:660.16px;line-height:15.36px;font-size:12.80px;white-space:nowrap;left:1273.00px;width:600.00px;text-align:center;color:#333;letter-spacing:-0.045em;">35</div>
<div class="" style="position:absolute;top:660.16px;line-height:15.36px;font-size:12.80px;white-space:nowrap;left:1373.56px;width:600.00px;text-align:center;color:#333;letter-spacing:-0.045em;">-</div>
<svg style="position:absolute;left:216px;top:681px;width:1491px;height:29px;overflow:visible"><rect x="1.20" y="1.38" width="1488.80" height="25.84" fill="#f3f3f3"/></svg>
<svg style="position:absolute;left:216px;top:707px;width:1491px;height:4px;overflow:visible"><rect x="1.20" y="1.12" width="1488.80" height="1.50" fill="#dedede"/></svg>
<svg viewBox="0 0 8 12" style="position:absolute;left:226.20px;top:688.48px;width:7.40px;height:10.40px"><path d="M1.3 1L6.7 6L1.3 11" fill="none" stroke="#a0a0a0" stroke-width="1.7"/></svg>
<svg style="position:absolute;left:239px;top:684px;width:32px;height:21px;overflow:visible"><rect x="1.80" y="1.88" width="28.40" height="18.00" rx="4.00" fill="#1c70c4"/></svg>
<div class="" style="position:absolute;top:687.62px;line-height:16.32px;font-size:13.60px;white-space:nowrap;left:-45.10px;width:600.00px;text-align:center;color:#fff;letter-spacing:-0.03em;-webkit-text-stroke:0.20px #fff;">500</div>
<div class="" style="position:absolute;left:276.40px;top:688.48px;width:13.40px;height:11.40px;border:1.40px solid #7ea3da;border-radius:1.40px;box-sizing:border-box;"></div>
<svg style="position:absolute;left:279px;top:685px;width:8px;height:6px;overflow:visible"><rect x="1.60" y="1.88" width="5.00" height="2.20" rx="0.80" fill="#7ea3da"/></svg>
<div class="" style="position:absolute;top:686.92px;line-height:15.12px;font-size:12.60px;white-space:nowrap;left:298.40px;color:#1a8a8a;letter-spacing:-0.012em;">My CRs &amp; Enhancements 2020</div>
<div class="" style="position:absolute;left:480.60px;top:688.08px;width:14.80px;height:14.00px;border:1.00px solid #c4c4c4;border-radius:1.80px;box-sizing:border-box;background:#f8f8f8;"></div>
<div style="position:absolute;left:485.80px;top:691.18px;width:0;height:0;border-top:4.10px solid transparent;border-bottom:4.10px solid transparent;border-left:6.40px solid #222;"></div>
<div class="" style="position:absolute;left:505.40px;top:689.28px;width:2.60px;height:2.60px;background:#3a3a3a;border-radius:50%;"></div>
<div class="" style="position:absolute;left:505.40px;top:693.58px;width:2.60px;height:2.60px;background:#3a3a3a;border-radius:50%;"></div>
<div class="" style="position:absolute;left:505.40px;top:697.88px;width:2.60px;height:2.60px;background:#3a3a3a;border-radius:50%;"></div>
<svg style="position:absolute;left:0;top:0;width:1706.00px;height:960.00px;overflow:visible;pointer-events:none" viewBox="0 0 1706 960"><polygon points="519.80,682.58 1720.00,682.58 1720.00,686.08 527.60,686.08 519.80,694.18" fill="#6db1f6"/></svg>
<svg style="position:absolute;left:617px;top:681px;width:5px;height:29px;overflow:visible"><rect x="1.76" y="1.38" width="1.50" height="25.84" fill="rgba(255,255,255,0.55)"/></svg>
<svg style="position:absolute;left:718px;top:681px;width:4px;height:29px;overflow:visible"><rect x="1.32" y="1.38" width="1.50" height="25.84" fill="rgba(255,255,255,0.55)"/></svg>
<svg style="position:absolute;left:818px;top:681px;width:5px;height:29px;overflow:visible"><rect x="1.88" y="1.38" width="1.50" height="25.84" fill="rgba(255,255,255,0.55)"/></svg>
<svg style="position:absolute;left:919px;top:681px;width:4px;height:29px;overflow:visible"><rect x="1.44" y="1.38" width="1.50" height="25.84" fill="rgba(255,255,255,0.55)"/></svg>
<svg style="position:absolute;left:1020px;top:681px;width:4px;height:29px;overflow:visible"><rect x="1.00" y="1.38" width="1.50" height="25.84" fill="rgba(255,255,255,0.55)"/></svg>
<svg style="position:absolute;left:1120px;top:681px;width:5px;height:29px;overflow:visible"><rect x="1.56" y="1.38" width="1.50" height="25.84" fill="rgba(255,255,255,0.55)"/></svg>
<svg style="position:absolute;left:1221px;top:681px;width:4px;height:29px;overflow:visible"><rect x="1.12" y="1.38" width="1.50" height="25.84" fill="rgba(255,255,255,0.55)"/></svg>
<svg style="position:absolute;left:1321px;top:681px;width:5px;height:29px;overflow:visible"><rect x="1.68" y="1.38" width="1.50" height="25.84" fill="rgba(255,255,255,0.55)"/></svg>
<svg style="position:absolute;left:1422px;top:681px;width:4px;height:29px;overflow:visible"><rect x="1.24" y="1.38" width="1.50" height="25.84" fill="rgba(255,255,255,0.55)"/></svg>
<svg style="position:absolute;left:1522px;top:681px;width:5px;height:29px;overflow:visible"><rect x="1.80" y="1.38" width="1.50" height="25.84" fill="rgba(255,255,255,0.55)"/></svg>
<svg style="position:absolute;left:1623px;top:681px;width:4px;height:29px;overflow:visible"><rect x="1.36" y="1.38" width="1.50" height="25.84" fill="rgba(255,255,255,0.55)"/></svg>
<div class="" style="position:absolute;top:687.40px;line-height:15.36px;font-size:12.80px;white-space:nowrap;left:267.40px;width:600.00px;text-align:center;color:#333;letter-spacing:-0.045em;">154</div>
<div class="" style="position:absolute;top:687.40px;line-height:15.36px;font-size:12.80px;white-space:nowrap;left:367.96px;width:600.00px;text-align:center;color:#333;letter-spacing:-0.045em;">96</div>
<div class="" style="position:absolute;top:687.40px;line-height:15.36px;font-size:12.80px;white-space:nowrap;left:468.52px;width:600.00px;text-align:center;color:#333;letter-spacing:-0.045em;">42</div>
<div class="" style="position:absolute;top:687.40px;line-height:15.36px;font-size:12.80px;white-space:nowrap;left:569.08px;width:600.00px;text-align:center;color:#333;letter-spacing:-0.045em;">39</div>
<div class="" style="position:absolute;top:687.40px;line-height:15.36px;font-size:12.80px;white-space:nowrap;left:669.64px;width:600.00px;text-align:center;color:#333;letter-spacing:-0.045em;">23</div>
<div class="" style="position:absolute;top:687.40px;line-height:15.36px;font-size:12.80px;white-space:nowrap;left:770.20px;width:600.00px;text-align:center;color:#333;letter-spacing:-0.045em;">-</div>
<div class="" style="position:absolute;top:687.40px;line-height:15.36px;font-size:12.80px;white-space:nowrap;left:870.76px;width:600.00px;text-align:center;color:#333;letter-spacing:-0.045em;">-</div>
<div class="" style="position:absolute;top:687.40px;line-height:15.36px;font-size:12.80px;white-space:nowrap;left:971.32px;width:600.00px;text-align:center;color:#333;letter-spacing:-0.045em;">-</div>
<div class="" style="position:absolute;top:687.40px;line-height:15.36px;font-size:12.80px;white-space:nowrap;left:1071.88px;width:600.00px;text-align:center;color:#333;letter-spacing:-0.045em;">-</div>
<div class="" style="position:absolute;top:687.40px;line-height:15.36px;font-size:12.80px;white-space:nowrap;left:1172.44px;width:600.00px;text-align:center;color:#333;letter-spacing:-0.045em;">-</div>
<div class="" style="position:absolute;top:687.40px;line-height:15.36px;font-size:12.80px;white-space:nowrap;left:1273.00px;width:600.00px;text-align:center;color:#333;letter-spacing:-0.045em;">-</div>
<div class="" style="position:absolute;top:687.40px;line-height:15.36px;font-size:12.80px;white-space:nowrap;left:1373.56px;width:600.00px;text-align:center;color:#333;letter-spacing:-0.045em;">-</div>
<svg style="position:absolute;left:216px;top:708px;width:1491px;height:29px;overflow:visible"><rect x="1.20" y="1.62" width="1488.80" height="25.84" fill="#f3f3f3"/></svg>
<svg style="position:absolute;left:216px;top:734px;width:1491px;height:4px;overflow:visible"><rect x="1.20" y="1.36" width="1488.80" height="1.50" fill="#dedede"/></svg>
<svg viewBox="0 0 8 12" style="position:absolute;left:226.20px;top:715.72px;width:7.40px;height:10.40px"><path d="M1.3 1L6.7 6L1.3 11" fill="none" stroke="#a0a0a0" stroke-width="1.7"/></svg>
<svg style="position:absolute;left:239px;top:712px;width:32px;height:21px;overflow:visible"><rect x="1.80" y="1.12" width="28.40" height="18.00" rx="4.00" fill="#1c70c4"/></svg>
<div class="" style="position:absolute;top:714.86px;line-height:16.32px;font-size:13.60px;white-space:nowrap;left:-45.10px;width:600.00px;text-align:center;color:#fff;letter-spacing:-0.03em;-webkit-text-stroke:0.20px #fff;">500</div>
<div class="" style="position:absolute;left:276.40px;top:715.72px;width:13.40px;height:11.40px;border:1.40px solid #7ea3da;border-radius:1.40px;box-sizing:border-box;"></div>
<svg style="position:absolute;left:279px;top:713px;width:8px;height:5px;overflow:visible"><rect x="1.60" y="1.12" width="5.00" height="2.20" rx="0.80" fill="#7ea3da"/></svg>
<div class="" style="position:absolute;top:714.16px;line-height:15.12px;font-size:12.60px;white-space:nowrap;left:298.40px;color:#1a8a8a;">My Project 2</div>
<div class="" style="position:absolute;left:480.60px;top:715.32px;width:14.80px;height:14.00px;border:1.00px solid #c4c4c4;border-radius:1.80px;box-sizing:border-box;background:#f8f8f8;"></div>
<div style="position:absolute;left:485.80px;top:718.42px;width:0;height:0;border-top:4.10px solid transparent;border-bottom:4.10px solid transparent;border-left:6.40px solid #222;"></div>
<div class="" style="position:absolute;left:505.40px;top:716.52px;width:2.60px;height:2.60px;background:#3a3a3a;border-radius:50%;"></div>
<div class="" style="position:absolute;left:505.40px;top:720.82px;width:2.60px;height:2.60px;background:#3a3a3a;border-radius:50%;"></div>
<div class="" style="position:absolute;left:505.40px;top:725.12px;width:2.60px;height:2.60px;background:#3a3a3a;border-radius:50%;"></div>
<svg style="position:absolute;left:0;top:0;width:1706.00px;height:960.00px;overflow:visible;pointer-events:none" viewBox="0 0 1706 960"><polygon points="620.36,709.82 1322.28,709.82 1322.28,720.22 1316.28,713.32 628.16,713.32 620.36,721.42" fill="#6db1f6"/></svg>
<svg style="position:absolute;left:617px;top:708px;width:5px;height:29px;overflow:visible"><rect x="1.76" y="1.62" width="1.50" height="25.84" fill="rgba(255,255,255,0.55)"/></svg>
<svg style="position:absolute;left:718px;top:708px;width:4px;height:29px;overflow:visible"><rect x="1.32" y="1.62" width="1.50" height="25.84" fill="rgba(255,255,255,0.55)"/></svg>
<svg style="position:absolute;left:818px;top:708px;width:5px;height:29px;overflow:visible"><rect x="1.88" y="1.62" width="1.50" height="25.84" fill="rgba(255,255,255,0.55)"/></svg>
<svg style="position:absolute;left:919px;top:708px;width:4px;height:29px;overflow:visible"><rect x="1.44" y="1.62" width="1.50" height="25.84" fill="rgba(255,255,255,0.55)"/></svg>
<svg style="position:absolute;left:1020px;top:708px;width:4px;height:29px;overflow:visible"><rect x="1.00" y="1.62" width="1.50" height="25.84" fill="rgba(255,255,255,0.55)"/></svg>
<svg style="position:absolute;left:1120px;top:708px;width:5px;height:29px;overflow:visible"><rect x="1.56" y="1.62" width="1.50" height="25.84" fill="rgba(255,255,255,0.55)"/></svg>
<svg style="position:absolute;left:1221px;top:708px;width:4px;height:29px;overflow:visible"><rect x="1.12" y="1.62" width="1.50" height="25.84" fill="rgba(255,255,255,0.55)"/></svg>
<svg style="position:absolute;left:1321px;top:708px;width:5px;height:29px;overflow:visible"><rect x="1.68" y="1.62" width="1.50" height="25.84" fill="rgba(255,255,255,0.55)"/></svg>
<svg style="position:absolute;left:1422px;top:708px;width:4px;height:29px;overflow:visible"><rect x="1.24" y="1.62" width="1.50" height="25.84" fill="rgba(255,255,255,0.55)"/></svg>
<svg style="position:absolute;left:1522px;top:708px;width:5px;height:29px;overflow:visible"><rect x="1.80" y="1.62" width="1.50" height="25.84" fill="rgba(255,255,255,0.55)"/></svg>
<svg style="position:absolute;left:1623px;top:708px;width:4px;height:29px;overflow:visible"><rect x="1.36" y="1.62" width="1.50" height="25.84" fill="rgba(255,255,255,0.55)"/></svg>
<div class="" style="position:absolute;top:714.64px;line-height:15.36px;font-size:12.80px;white-space:nowrap;left:267.40px;width:600.00px;text-align:center;color:#333;letter-spacing:-0.045em;">-</div>
<div class="" style="position:absolute;top:714.64px;line-height:15.36px;font-size:12.80px;white-space:nowrap;left:367.96px;width:600.00px;text-align:center;color:#333;letter-spacing:-0.045em;">20</div>
<div class="" style="position:absolute;top:714.64px;line-height:15.36px;font-size:12.80px;white-space:nowrap;left:468.52px;width:600.00px;text-align:center;color:#333;letter-spacing:-0.045em;">20</div>
<div class="" style="position:absolute;top:714.64px;line-height:15.36px;font-size:12.80px;white-space:nowrap;left:569.08px;width:600.00px;text-align:center;color:#333;letter-spacing:-0.045em;">35</div>
<div class="" style="position:absolute;top:714.64px;line-height:15.36px;font-size:12.80px;white-space:nowrap;left:669.64px;width:600.00px;text-align:center;color:#333;letter-spacing:-0.045em;">20</div>
<div class="" style="position:absolute;top:714.64px;line-height:15.36px;font-size:12.80px;white-space:nowrap;left:770.20px;width:600.00px;text-align:center;color:#333;letter-spacing:-0.045em;">30</div>
<div class="" style="position:absolute;top:714.64px;line-height:15.36px;font-size:12.80px;white-space:nowrap;left:870.76px;width:600.00px;text-align:center;color:#333;letter-spacing:-0.045em;">30</div>
<div class="" style="position:absolute;top:714.64px;line-height:15.36px;font-size:12.80px;white-space:nowrap;left:971.32px;width:600.00px;text-align:center;color:#333;letter-spacing:-0.045em;">25</div>
<div class="" style="position:absolute;top:714.64px;line-height:15.36px;font-size:12.80px;white-space:nowrap;left:1071.88px;width:600.00px;text-align:center;color:#333;letter-spacing:-0.045em;">-</div>
<div class="" style="position:absolute;top:714.64px;line-height:15.36px;font-size:12.80px;white-space:nowrap;left:1172.44px;width:600.00px;text-align:center;color:#333;letter-spacing:-0.045em;">-</div>
<div class="" style="position:absolute;top:714.64px;line-height:15.36px;font-size:12.80px;white-space:nowrap;left:1273.00px;width:600.00px;text-align:center;color:#333;letter-spacing:-0.045em;">-</div>
<div class="" style="position:absolute;top:714.64px;line-height:15.36px;font-size:12.80px;white-space:nowrap;left:1373.56px;width:600.00px;text-align:center;color:#333;letter-spacing:-0.045em;">-</div>
<svg style="position:absolute;left:216px;top:735px;width:1491px;height:29px;overflow:visible"><rect x="1.20" y="1.86" width="1488.80" height="25.84" fill="#f3f3f3"/></svg>
<svg style="position:absolute;left:216px;top:761px;width:1491px;height:5px;overflow:visible"><rect x="1.20" y="1.60" width="1488.80" height="1.50" fill="#dedede"/></svg>
<svg viewBox="0 0 8 12" style="position:absolute;left:226.20px;top:742.96px;width:7.40px;height:10.40px"><path d="M1.3 1L6.7 6L1.3 11" fill="none" stroke="#a0a0a0" stroke-width="1.7"/></svg>
<svg style="position:absolute;left:239px;top:739px;width:32px;height:21px;overflow:visible"><rect x="1.80" y="1.36" width="28.40" height="18.00" rx="4.00" fill="#1c70c4"/></svg>
<div class="" style="position:absolute;top:742.10px;line-height:16.32px;font-size:13.60px;white-space:nowrap;left:-45.10px;width:600.00px;text-align:center;color:#fff;letter-spacing:-0.03em;-webkit-text-stroke:0.20px #fff;">500</div>
<div class="" style="position:absolute;left:276.40px;top:742.96px;width:13.40px;height:11.40px;border:1.40px solid #7ea3da;border-radius:1.40px;box-sizing:border-box;"></div>
<svg style="position:absolute;left:279px;top:740px;width:8px;height:5px;overflow:visible"><rect x="1.60" y="1.36" width="5.00" height="2.20" rx="0.80" fill="#7ea3da"/></svg>
<div class="" style="position:absolute;top:741.40px;line-height:15.12px;font-size:12.60px;white-space:nowrap;left:298.40px;color:#1a8a8a;">Project THREE</div>
<div class="" style="position:absolute;left:480.60px;top:742.56px;width:14.80px;height:14.00px;border:1.00px solid #c4c4c4;border-radius:1.80px;box-sizing:border-box;background:#f8f8f8;"></div>
<svg viewBox="0 0 10 10" style="position:absolute;left:483.20px;top:744.96px;width:9.60px;height:9.60px"><path d="M1 9L1.8 6.2L7 1L9 3L3.8 8.2z" fill="#333"/></svg>
<div class="" style="position:absolute;left:505.40px;top:743.76px;width:2.60px;height:2.60px;background:#3a3a3a;border-radius:50%;"></div>
<div class="" style="position:absolute;left:505.40px;top:748.06px;width:2.60px;height:2.60px;background:#3a3a3a;border-radius:50%;"></div>
<div class="" style="position:absolute;left:505.40px;top:752.36px;width:2.60px;height:2.60px;background:#3a3a3a;border-radius:50%;"></div>
<svg style="position:absolute;left:0;top:0;width:1706.00px;height:960.00px;overflow:visible;pointer-events:none" viewBox="0 0 1706 960"><polygon points="620.36,737.06 1221.72,737.06 1221.72,747.46 1215.72,740.56 628.16,740.56 620.36,748.66" fill="#6db1f6"/></svg>
<svg style="position:absolute;left:617px;top:735px;width:5px;height:29px;overflow:visible"><rect x="1.76" y="1.86" width="1.50" height="25.84" fill="rgba(255,255,255,0.55)"/></svg>
<svg style="position:absolute;left:718px;top:735px;width:4px;height:29px;overflow:visible"><rect x="1.32" y="1.86" width="1.50" height="25.84" fill="rgba(255,255,255,0.55)"/></svg>
<svg style="position:absolute;left:818px;top:735px;width:5px;height:29px;overflow:visible"><rect x="1.88" y="1.86" width="1.50" height="25.84" fill="rgba(255,255,255,0.55)"/></svg>
<svg style="position:absolute;left:919px;top:735px;width:4px;height:29px;overflow:visible"><rect x="1.44" y="1.86" width="1.50" height="25.84" fill="rgba(255,255,255,0.55)"/></svg>
<svg style="position:absolute;left:1020px;top:735px;width:4px;height:29px;overflow:visible"><rect x="1.00" y="1.86" width="1.50" height="25.84" fill="rgba(255,255,255,0.55)"/></svg>
<svg style="position:absolute;left:1120px;top:735px;width:5px;height:29px;overflow:visible"><rect x="1.56" y="1.86" width="1.50" height="25.84" fill="rgba(255,255,255,0.55)"/></svg>
<svg style="position:absolute;left:1221px;top:735px;width:4px;height:29px;overflow:visible"><rect x="1.12" y="1.86" width="1.50" height="25.84" fill="rgba(255,255,255,0.55)"/></svg>
<svg style="position:absolute;left:1321px;top:735px;width:5px;height:29px;overflow:visible"><rect x="1.68" y="1.86" width="1.50" height="25.84" fill="rgba(255,255,255,0.55)"/></svg>
<svg style="position:absolute;left:1422px;top:735px;width:4px;height:29px;overflow:visible"><rect x="1.24" y="1.86" width="1.50" height="25.84" fill="rgba(255,255,255,0.55)"/></svg>
<svg style="position:absolute;left:1522px;top:735px;width:5px;height:29px;overflow:visible"><rect x="1.80" y="1.86" width="1.50" height="25.84" fill="rgba(255,255,255,0.55)"/></svg>
<svg style="position:absolute;left:1623px;top:735px;width:4px;height:29px;overflow:visible"><rect x="1.36" y="1.86" width="1.50" height="25.84" fill="rgba(255,255,255,0.55)"/></svg>
<div class="" style="position:absolute;top:741.88px;line-height:15.36px;font-size:12.80px;white-space:nowrap;left:267.40px;width:600.00px;text-align:center;color:#333;letter-spacing:-0.045em;">-</div>
<div class="" style="position:absolute;top:741.88px;line-height:15.36px;font-size:12.80px;white-space:nowrap;left:367.96px;width:600.00px;text-align:center;color:#333;letter-spacing:-0.045em;">10</div>
<div class="" style="position:absolute;top:741.88px;line-height:15.36px;font-size:12.80px;white-space:nowrap;left:468.52px;width:600.00px;text-align:center;color:#333;letter-spacing:-0.045em;">-</div>
<div class="" style="position:absolute;top:741.88px;line-height:15.36px;font-size:12.80px;white-space:nowrap;left:569.08px;width:600.00px;text-align:center;color:#333;letter-spacing:-0.045em;">-</div>
<div class="" style="position:absolute;top:741.88px;line-height:15.36px;font-size:12.80px;white-space:nowrap;left:669.64px;width:600.00px;text-align:center;color:#333;letter-spacing:-0.045em;">-</div>
<div class="" style="position:absolute;top:741.88px;line-height:15.36px;font-size:12.80px;white-space:nowrap;left:770.20px;width:600.00px;text-align:center;color:#333;letter-spacing:-0.045em;">-</div>
<div class="" style="position:absolute;top:741.88px;line-height:15.36px;font-size:12.80px;white-space:nowrap;left:870.76px;width:600.00px;text-align:center;color:#333;letter-spacing:-0.045em;">-</div>
<div class="" style="position:absolute;top:741.88px;line-height:15.36px;font-size:12.80px;white-space:nowrap;left:971.32px;width:600.00px;text-align:center;color:#333;letter-spacing:-0.045em;">-</div>
<div class="" style="position:absolute;top:741.88px;line-height:15.36px;font-size:12.80px;white-space:nowrap;left:1071.88px;width:600.00px;text-align:center;color:#333;letter-spacing:-0.045em;">-</div>
<div class="" style="position:absolute;top:741.88px;line-height:15.36px;font-size:12.80px;white-space:nowrap;left:1172.44px;width:600.00px;text-align:center;color:#333;letter-spacing:-0.045em;">-</div>
<div class="" style="position:absolute;top:741.88px;line-height:15.36px;font-size:12.80px;white-space:nowrap;left:1273.00px;width:600.00px;text-align:center;color:#333;letter-spacing:-0.045em;">-</div>
<div class="" style="position:absolute;top:741.88px;line-height:15.36px;font-size:12.80px;white-space:nowrap;left:1373.56px;width:600.00px;text-align:center;color:#333;letter-spacing:-0.045em;">-</div>
<svg style="position:absolute;left:216px;top:825px;width:1491px;height:5px;overflow:visible"><rect x="1.20" y="1.40" width="1488.80" height="2.20" fill="#d4d4d4"/></svg>
<div class="" style="position:absolute;top:843.60px;line-height:27.60px;font-size:23.00px;white-space:nowrap;left:670.00px;width:600.00px;text-align:center;color:#444;-webkit-text-stroke:0.20px #444;">You have no excluded projects</div>
<div class="" style="position:absolute;left:940.80px;top:871.00px;width:59.20px;height:12.00px;background:#f2f2f2;border:0.80px solid #ccc;box-sizing:border-box;"></div>
<svg viewBox="0 0 12 8" style="position:absolute;left:965.20px;top:873.20px;width:10.00px;height:6.80px"><path d="M1.2 1.2L6 6L10.8 1.2" fill="none" stroke="#222" stroke-width="2.4"/></svg>
<svg style="position:absolute;left:-1px;top:882px;width:1708px;height:5px;overflow:visible"><rect x="1.00" y="1.00" width="1706.00" height="2.20" fill="#e4e4e4"/></svg>
<div class="" style="position:absolute;top:909.32px;line-height:16.56px;font-size:13.80px;white-space:nowrap;left:1532.80px;color:#858585;">Revert</div>
<svg style="position:absolute;left:1615px;top:897px;width:92px;height:37px;overflow:visible"><rect x="1.60" y="1.60" width="89.00" height="34.40" rx="3.60" fill="#868686"/></svg>
<div class="" style="position:absolute;top:908.48px;line-height:17.04px;font-size:14.20px;white-space:nowrap;left:1638.00px;color:#fff;-webkit-text-stroke:0.24px #fff;">Submit</div>
<svg style="position:absolute;left:516px;top:153px;width:5px;height:675px;overflow:visible"><rect x="1.80" y="1.00" width="1.80" height="673.00" fill="#c6c6c6"/></svg>
</div></body></html>
